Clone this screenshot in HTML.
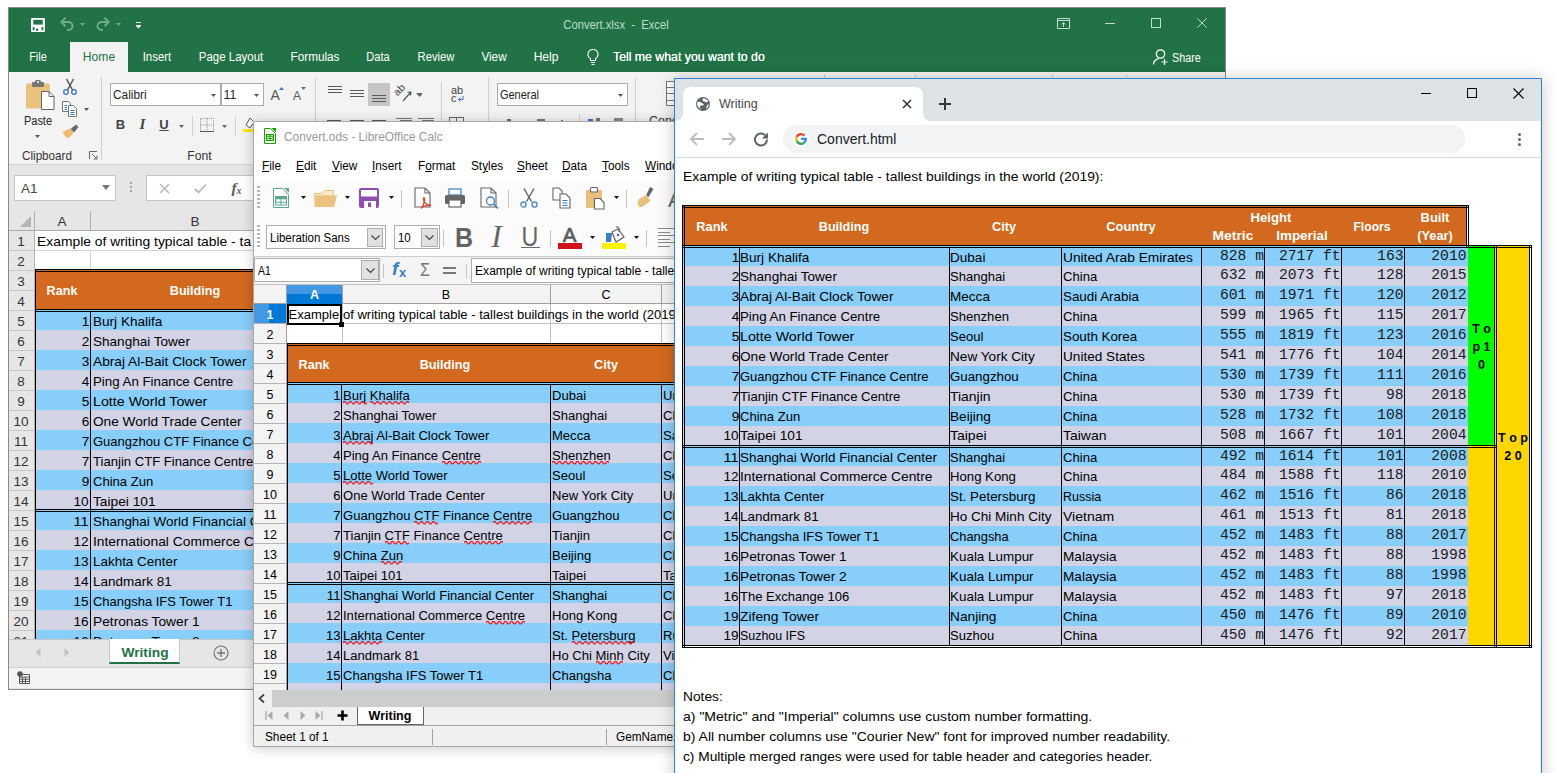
<!DOCTYPE html>
<html><head><meta charset="utf-8"><title>Convert</title>
<style>
html,body{margin:0;padding:0;background:#fff;}
body{width:1557px;height:773px;position:relative;overflow:hidden;font-family:"Liberation Sans",sans-serif;}
.win{position:absolute;overflow:hidden;}
.win div,.win svg{position:absolute;}
.in{width:1600px;height:900px;}
u{text-decoration:underline;}
</style></head><body>
<div class="win" style="left:8px;top:7px;width:1218px;height:683px;border:1px solid #8a8a8a;box-sizing:border-box;z-index:1"><div class="in" style="left:-9px;top:-8px"><div style="left:8px;top:7px;width:1218px;height:683px;background:#e6e6e6;"></div><div style="left:9px;top:8px;width:1216px;height:64px;background:#217346;"></div><svg style="left:31px;top:18px;" width="14" height="14" viewBox="0 0 14 14"><rect x="0" y="0" width="14" height="14" rx="1.200" fill="#fff"/><rect x="2.300" y="1.800" width="9.400" height="4.800" fill="#217346"/><rect x="1.700" y="9" width="1.700" height="3.400" fill="#217346"/><rect x="10.600" y="9" width="1.700" height="3.400" fill="#217346"/><rect x="4.800" y="10.600" width="2.400" height="2.200" fill="#217346"/></svg><svg style="left:59px;top:16px;" width="16" height="16" viewBox="0 0 16 16"><path d="M2.500 6 H9.500 A4 4 0 0 1 9.500 14 H8 M6.500 1.800 L2.300 6 L6.500 10.200" stroke="#6ea98a" stroke-width="2" fill="none"/></svg><svg style="left:80px;top:23px;" width="5" height="3" viewBox="0 0 5 3"><path d="M0 0 H5 L2.500 3Z" fill="#6ea98a"/></svg><svg style="left:95px;top:16px;" width="16" height="16" viewBox="0 0 16 16"><path d="M13.500 6 H6.500 A4 4 0 0 0 6.500 14 H8 M9.500 1.800 L13.700 6 L9.500 10.200" stroke="#6ea98a" stroke-width="2" fill="none"/></svg><svg style="left:116px;top:23px;" width="5" height="3" viewBox="0 0 5 3"><path d="M0 0 H5 L2.500 3Z" fill="#6ea98a"/></svg><svg style="left:136px;top:21.5px;" width="5" height="7" viewBox="0 0 5 7"><path d="M0 0.500 H5 M0 3.500 H5" stroke="#fff" stroke-width="1"/><path d="M0 4 H5 L2.500 6.500Z" fill="#fff"/></svg><div style="top:16.5px;height:16px;line-height:16px;font-size:12px;color:#bfdccb;font-family:'Liberation Sans',sans-serif;white-space:nowrap;left:466.20000000000005px;width:300px;text-align:center;transform:scaleX(0.9353);transform-origin:center center;">Convert.xlsx&nbsp; -&nbsp; Excel</div><svg style="left:1057px;top:18px;" width="13" height="11" viewBox="0 0 13 11"><path d="M0.500 0.500 H12.500 V10.500 H0.500 Z M0.500 2.500 H12.500 M6.500 9 V5 M4.500 6.500 L6.500 4.500 L8.500 6.500" stroke="#c2dccd" stroke-width="1" fill="none"/></svg><div style="left:1105px;top:23px;width:10px;height:1px;background:#c2dccd;"></div><div style="left:1151px;top:18px;width:10px;height:10px;border:1px solid #c2dccd;box-sizing:border-box;"></div><svg style="left:1197px;top:18px;" width="10" height="10" viewBox="0 0 10 10"><path d="M0.300 0.300 L9.700 9.700 M9.700 0.300 L0.300 9.700" stroke="#c2dccd" stroke-width="1" fill="none"/></svg><div style="left:70px;top:42px;width:58px;height:30px;background:#f3f3f3;"></div><div style="top:49.35px;height:16.3px;line-height:16.3px;font-size:12.3px;color:#fff;font-family:'Liberation Sans',sans-serif;white-space:nowrap;left:-22.0px;width:120px;text-align:center;transform:scaleX(0.888);transform-origin:center center;">File</div><div style="top:49.35px;height:16.3px;line-height:16.3px;font-size:12.3px;color:#217346;font-family:'Liberation Sans',sans-serif;white-space:nowrap;left:39.0px;width:120px;text-align:center;transform:scaleX(0.9844);transform-origin:center center;">Home</div><div style="top:49.35px;height:16.3px;line-height:16.3px;font-size:12.3px;color:#fff;font-family:'Liberation Sans',sans-serif;white-space:nowrap;left:96.5px;width:120px;text-align:center;transform:scaleX(0.9297);transform-origin:center center;">Insert</div><div style="top:49.35px;height:16.3px;line-height:16.3px;font-size:12.3px;color:#fff;font-family:'Liberation Sans',sans-serif;white-space:nowrap;left:170.5px;width:120px;text-align:center;transform:scaleX(0.9323);transform-origin:center center;">Page Layout</div><div style="top:49.35px;height:16.3px;line-height:16.3px;font-size:12.3px;color:#fff;font-family:'Liberation Sans',sans-serif;white-space:nowrap;left:254.5px;width:120px;text-align:center;transform:scaleX(0.9559);transform-origin:center center;">Formulas</div><div style="top:49.35px;height:16.3px;line-height:16.3px;font-size:12.3px;color:#fff;font-family:'Liberation Sans',sans-serif;white-space:nowrap;left:318.0px;width:120px;text-align:center;transform:scaleX(0.9006);transform-origin:center center;">Data</div><div style="top:49.35px;height:16.3px;line-height:16.3px;font-size:12.3px;color:#fff;font-family:'Liberation Sans',sans-serif;white-space:nowrap;left:375.5px;width:120px;text-align:center;transform:scaleX(0.9149);transform-origin:center center;">Review</div><div style="top:49.35px;height:16.3px;line-height:16.3px;font-size:12.3px;color:#fff;font-family:'Liberation Sans',sans-serif;white-space:nowrap;left:433.5px;width:120px;text-align:center;transform:scaleX(0.9531);transform-origin:center center;">View</div><div style="top:49.35px;height:16.3px;line-height:16.3px;font-size:12.3px;color:#fff;font-family:'Liberation Sans',sans-serif;white-space:nowrap;left:485.5px;width:120px;text-align:center;transform:scaleX(0.9764);transform-origin:center center;">Help</div><svg style="left:586px;top:48px;" width="14" height="18" viewBox="0 0 14 18"><path d="M7 1.500 A4.800 4.800 0 0 1 9.500 10.500 V12.500 H4.500 V10.500 A4.800 4.800 0 0 1 7 1.500 Z M5 14.500 H9 M5.500 16.500 H8.500" stroke="#fff" stroke-width="1.100" fill="none"/></svg><div style="top:49.35px;height:16.3px;line-height:16.3px;font-size:12.3px;color:#fff;font-family:'Liberation Sans',sans-serif;white-space:nowrap;left:613px;text-shadow:0 0 .4px #fff;">Tell me what you want to do</div><svg style="left:1152px;top:48px;" width="16" height="18" viewBox="0 0 16 18"><circle cx="8.500" cy="6" r="4.200" stroke="#fff" stroke-width="1.200" fill="none"/><path d="M1.500 16.500 A6 6 0 0 1 6.500 10.800 M9.500 14 H15.500 M12.500 11 V17" stroke="#fff" stroke-width="1.200" fill="none"/></svg><div style="top:49.5px;height:16px;line-height:16px;font-size:12px;color:#fff;font-family:'Liberation Sans',sans-serif;white-space:nowrap;left:1172px;transform:scaleX(0.8994);transform-origin:left center;">Share</div><div style="left:9px;top:72px;width:1216px;height:92px;background:#f3f3f3;"></div><div style="left:9px;top:164px;width:1216px;height:1px;background:#d2d2d2;"></div><svg style="left:25px;top:80px;" width="32" height="34" viewBox="0 0 32 34"><rect x="1" y="3.500" width="24" height="25" rx="1.500" fill="#e9c27c"/><rect x="7" y="2" width="12" height="5" rx="1" fill="#777"/><rect x="10" y="0" width="6" height="4" rx="1.500" fill="#777"/><rect x="12" y="1.300" width="2" height="1.500" fill="#f3f3f3"/><path d="M16.500 11.500 H24 L29 16.500 V29.500 H16.500 Z" fill="#fff" stroke="#666" stroke-width="1"/><path d="M24 11.500 V16.500 H29" fill="none" stroke="#666" stroke-width="1"/></svg><div style="top:112.85px;height:16.3px;line-height:16.3px;font-size:12.3px;color:#262626;font-family:'Liberation Sans',sans-serif;white-space:nowrap;left:8.200000000000003px;width:60px;text-align:center;transform:scaleX(0.8902);transform-origin:center center;">Paste</div><svg style="left:35px;top:134.5px;" width="5" height="3" viewBox="0 0 5 3"><path d="M0 0 H5 L2.500 3Z" fill="#555"/></svg><svg style="left:62px;top:78px;" width="16" height="18" viewBox="0 0 16 18"><path d="M4.500 1 L10.500 12 M11.500 1 L5.500 12" stroke="#555" stroke-width="1.500" fill="none"/><circle cx="4" cy="14" r="2.300" stroke="#3b73b9" stroke-width="1.300" fill="none"/><circle cx="12" cy="14" r="2.300" stroke="#3b73b9" stroke-width="1.300" fill="none"/></svg><svg style="left:62px;top:101px;" width="16" height="16" viewBox="0 0 16 16"><path d="M0.500 0.500 H6.500 L8.500 2.500 V10.500 H0.500 Z" fill="#fff" stroke="#777"/><path d="M2.500 4.500 H5 M2.500 6.500 H5 M2.500 8.500 H5" stroke="#3b73b9"/><path d="M6.500 4.500 H11.500 L14.500 7.500 V15.500 H6.500 Z" fill="#fff" stroke="#777"/><path d="M8.500 9.500 H12.500 M8.500 11.500 H12.500 M8.500 13.500 H12.500" stroke="#3b73b9"/></svg><svg style="left:84px;top:107.5px;" width="5" height="3" viewBox="0 0 5 3"><path d="M0 0 H5 L2.500 3Z" fill="#555"/></svg><svg style="left:62px;top:124px;" width="18" height="16" viewBox="0 0 18 16"><path d="M8.500 5 L14 0.500 L16.500 3 L12 8.500 Z" fill="#6a6a6a"/><path d="M0.500 8 L8 4.500 L11.500 9 L6.500 14 L4 13.500 Z" fill="#ecbc6c"/></svg><div style="top:148.4px;height:16.2px;line-height:16.2px;font-size:12.2px;color:#333;font-family:'Liberation Sans',sans-serif;white-space:nowrap;left:6.5px;width:80px;text-align:center;transform:scaleX(0.9575);transform-origin:center center;">Clipboard</div><svg style="left:89px;top:151px;" width="9" height="9" viewBox="0 0 9 9"><path d="M0.500 8 V0.500 H8 M3 3 L8 8 M8 4.500 V8 H4.500" stroke="#666" stroke-width="1" fill="none"/></svg><div style="left:101px;top:77px;width:1px;height:83px;background:#d0d0d0;"></div><div style="left:110px;top:83px;width:111px;height:23px;background:#fff;border:1px solid #ababab;box-sizing:border-box;"></div><div style="left:221px;top:83px;width:43px;height:23px;background:#fff;border:1px solid #ababab;box-sizing:border-box;"></div><div style="top:86.85px;height:16.3px;line-height:16.3px;font-size:12.3px;color:#222;font-family:'Liberation Sans',sans-serif;white-space:nowrap;left:113px;transform:scaleX(0.9639);transform-origin:left center;">Calibri</div><div style="top:86.85px;height:16.3px;line-height:16.3px;font-size:12.3px;color:#222;font-family:'Liberation Sans',sans-serif;white-space:nowrap;left:223.5px;">11</div><svg style="left:211px;top:93.5px;" width="5" height="3" viewBox="0 0 5 3"><path d="M0 0 H5 L2.500 3Z" fill="#555"/></svg><svg style="left:254px;top:93.5px;" width="5" height="3" viewBox="0 0 5 3"><path d="M0 0 H5 L2.500 3Z" fill="#555"/></svg><div style="top:86.0px;height:18px;line-height:18px;font-size:14px;color:#555;font-family:'Liberation Sans',sans-serif;white-space:nowrap;left:270.5px;">A</div><svg style="left:278.5px;top:87px;" width="5" height="3" viewBox="0 0 5 3"><path d="M0 3 H5 L2.500 0Z" fill="#3b73b9"/></svg><div style="top:88.0px;height:16px;line-height:16px;font-size:12px;color:#555;font-family:'Liberation Sans',sans-serif;white-space:nowrap;left:293px;">A</div><svg style="left:300.5px;top:87px;" width="5" height="3" viewBox="0 0 5 3"><path d="M0 0 H5 L2.500 3Z" fill="#3b73b9"/></svg><div style="top:115.8px;height:17px;line-height:17px;font-size:13px;color:#444;font-family:'Liberation Sans',sans-serif;white-space:nowrap;font-weight:bold;left:110.5px;width:20px;text-align:center;">B</div><div style="top:114.8px;height:19px;line-height:19px;font-size:15px;color:#444;font-family:'Liberation Serif',serif;white-space:nowrap;left:132.5px;width:20px;text-align:center;font-style:italic;font-weight:bold;">I</div><div style="top:115.8px;height:17px;line-height:17px;font-size:13px;color:#444;font-family:'Liberation Sans',sans-serif;white-space:nowrap;font-weight:bold;left:154.0px;width:20px;text-align:center;text-decoration:underline;">U</div><svg style="left:179px;top:124.5px;" width="5" height="3" viewBox="0 0 5 3"><path d="M0 0 H5 L2.500 3Z" fill="#666"/></svg><div style="left:192px;top:116px;width:1px;height:20px;background:#d0d0d0;"></div><svg style="left:200px;top:118px;" width="14" height="14" viewBox="0 0 14 14"><path d="M0.500 0.500 H13.500 V13.500 H0.500 Z M7 0.500 V13.500 M0.500 7 H13.500" stroke="#8a8a8a" stroke-width="1" stroke-dasharray="1 1.100" fill="none"/><path d="M0 13.500 H14" stroke="#555" stroke-width="1"/></svg><svg style="left:222px;top:124.5px;" width="5" height="3" viewBox="0 0 5 3"><path d="M0 0 H5 L2.500 3Z" fill="#666"/></svg><div style="left:235px;top:116px;width:1px;height:20px;background:#d0d0d0;"></div><svg style="left:243px;top:116px;" width="12" height="18" viewBox="0 0 12 18"><path d="M3 9 L7 2 L11 6 L7 12 Z" stroke="#555" fill="#fff"/><rect x="0" y="13" width="12" height="3" fill="#ffe800"/></svg><div style="top:148.4px;height:16.2px;line-height:16.2px;font-size:12.2px;color:#333;font-family:'Liberation Sans',sans-serif;white-space:nowrap;left:159.5px;width:80px;text-align:center;">Font</div><div style="left:315px;top:77px;width:1px;height:83px;background:#d0d0d0;"></div><div style="left:368px;top:83px;width:22px;height:23px;background:#c6c6c6;"></div><div style="left:328px;top:86px;width:14px;height:1px;background:#5a5a5a;"></div><div style="left:328px;top:89px;width:14px;height:1px;background:#5a5a5a;"></div><div style="left:328px;top:92px;width:14px;height:1px;background:#5a5a5a;"></div><div style="left:350px;top:90px;width:14px;height:1px;background:#5a5a5a;"></div><div style="left:350px;top:93px;width:14px;height:1px;background:#5a5a5a;"></div><div style="left:350px;top:96px;width:14px;height:1px;background:#5a5a5a;"></div><div style="left:372px;top:95px;width:14px;height:1px;background:#5a5a5a;"></div><div style="left:372px;top:98px;width:14px;height:1px;background:#5a5a5a;"></div><div style="left:372px;top:101px;width:14px;height:1px;background:#5a5a5a;"></div><svg style="left:394px;top:84px;" width="20" height="20" viewBox="0 0 20 20"><path d="M9 17 L17 8 M17 8 L13.500 8.500 M17 8 L16.500 11.500" stroke="#555" stroke-width="1.200" fill="none"/><text x="0" y="0" font-size="10.500" fill="#444" font-family="Liberation Sans" transform="translate(3.500 12.500) rotate(-45)">ab</text></svg><svg style="left:416px;top:93px;" width="6" height="4" viewBox="0 0 6 4"><path d="M0 0 H7 L3.500 4Z" fill="#666"/></svg><div style="left:441px;top:82px;width:1px;height:78px;background:#d0d0d0;"></div><div style="top:82.5px;height:15px;line-height:15px;font-size:11px;color:#444;font-family:'Liberation Sans',sans-serif;white-space:nowrap;left:451px;">ab</div><div style="top:90.5px;height:15px;line-height:15px;font-size:11px;color:#444;font-family:'Liberation Sans',sans-serif;white-space:nowrap;left:451px;">c</div><svg style="left:457px;top:96px;" width="7" height="6" viewBox="0 0 7 6"><path d="M6 0 V3.500 H1.500 M3.500 1.500 L1.500 3.500 L3.500 5.500" stroke="#3b73b9" stroke-width="1" fill="none"/></svg><div style="left:488px;top:77px;width:1px;height:83px;background:#d0d0d0;"></div><div style="left:497px;top:83px;width:131px;height:23px;background:#fff;border:1px solid #ababab;box-sizing:border-box;"></div><div style="top:86.85px;height:16.3px;line-height:16.3px;font-size:12.3px;color:#222;font-family:'Liberation Sans',sans-serif;white-space:nowrap;left:500px;transform:scaleX(0.8912);transform-origin:left center;">General</div><svg style="left:618px;top:93.5px;" width="5" height="3" viewBox="0 0 5 3"><path d="M0 0 H5 L2.500 3Z" fill="#555"/></svg><div style="left:635px;top:77px;width:1px;height:83px;background:#d0d0d0;"></div><div style="left:666px;top:81px;width:14px;height:25px;background:#fff;border:1px solid #777;box-sizing:border-box;"></div><div style="left:666px;top:87.2px;width:14px;height:1px;background:#777;"></div><div style="left:666px;top:93.4px;width:14px;height:1px;background:#777;"></div><div style="left:666px;top:99.6px;width:14px;height:1px;background:#777;"></div><div style="top:113.25px;height:16.5px;line-height:16.5px;font-size:12.5px;color:#333;font-family:'Liberation Sans',sans-serif;white-space:nowrap;left:649px;">Conditional</div><div style="left:327px;top:120px;width:14px;height:1px;background:#5a5a5a;"></div><div style="left:350px;top:120px;width:14px;height:1px;background:#5a5a5a;"></div><div style="left:372px;top:120px;width:14px;height:1px;background:#5a5a5a;"></div><div style="left:396px;top:118px;width:16px;height:1px;background:#777;"></div><div style="left:400px;top:120px;width:12px;height:1px;background:#777;"></div><div style="left:418px;top:118px;width:16px;height:1px;background:#777;"></div><div style="left:422px;top:120px;width:12px;height:1px;background:#777;"></div><div style="left:449px;top:117px;width:15px;height:6px;border:1px solid #666;box-sizing:border-box;"></div><div style="left:456px;top:117px;width:1px;height:4px;background:#666;"></div><div style="left:507px;top:119px;width:4px;height:2px;background:#666;"></div><div style="left:537px;top:119px;width:8px;height:2px;background:#777;"></div><div style="left:561px;top:120px;width:2px;height:1px;background:#777;"></div><div style="left:579px;top:114px;width:1px;height:7px;background:#d0d0d0;"></div><div style="left:588px;top:119px;width:5px;height:2px;background:#3b73b9;"></div><div style="left:596px;top:118px;width:4px;height:3px;background:#777;"></div><div style="left:614px;top:118px;width:9px;height:3px;background:#888;"></div><div style="left:824px;top:75px;width:1px;height:5px;background:#c8c8c8;"></div><div style="left:915px;top:75px;width:1px;height:5px;background:#c8c8c8;"></div><div style="left:1052px;top:75px;width:1px;height:5px;background:#c8c8c8;"></div><div style="left:1126px;top:75px;width:1px;height:5px;background:#c8c8c8;"></div><div style="left:14px;top:175px;width:102px;height:26px;background:#fff;border:1px solid #c6c6c6;box-sizing:border-box;"></div><div style="top:179.75px;height:17.5px;line-height:17.5px;font-size:13.5px;color:#444;font-family:'Liberation Sans',sans-serif;white-space:nowrap;left:21px;">A1</div><svg style="left:102px;top:185px;" width="8" height="5" viewBox="0 0 8 5"><path d="M0 0 H8 L4 5Z" fill="#777"/></svg><div style="left:130px;top:182px;width:2px;height:2px;background:#a0a0a0;"></div><div style="left:130px;top:186px;width:2px;height:2px;background:#a0a0a0;"></div><div style="left:130px;top:190px;width:2px;height:2px;background:#a0a0a0;"></div><div style="left:146px;top:175px;width:700px;height:26px;background:#fff;border:1px solid #c6c6c6;box-sizing:border-box;"></div><svg style="left:159px;top:183px;" width="11" height="11" viewBox="0 0 11 11"><path d="M1 1 L10 10 M10 1 L1 10" stroke="#b9b9b9" stroke-width="1.500" fill="none"/></svg><svg style="left:194px;top:183px;" width="13" height="11" viewBox="0 0 13 11"><path d="M1 6 L4.500 9.500 L12 1.500" stroke="#b9b9b9" stroke-width="1.800" fill="none"/></svg><div style="top:177.75px;height:19.5px;line-height:19.5px;font-size:15.5px;color:#5a5a5a;font-family:'Liberation Serif',serif;white-space:nowrap;left:231.5px;font-style:italic;font-weight:bold;">f</div><div style="top:183.5px;height:14px;line-height:14px;font-size:10px;color:#5a5a5a;font-family:'Liberation Serif',serif;white-space:nowrap;left:236.5px;font-style:italic;font-weight:bold;">x</div><div style="left:9px;top:211px;width:1216px;height:20px;background:#e6e6e6;"></div><svg style="left:20px;top:216px;" width="12" height="12" viewBox="0 0 12 12"><path d="M11 0 V11 H0 Z" fill="#b4b4b4"/></svg><div style="left:34px;top:211px;width:1px;height:20px;background:#b1b1b1;"></div><div style="left:90px;top:211px;width:1px;height:20px;background:#b1b1b1;"></div><div style="left:9px;top:230px;width:300px;height:1px;background:#ababab;"></div><div style="top:212.75px;height:17.5px;line-height:17.5px;font-size:13.5px;color:#333;font-family:'Liberation Sans',sans-serif;white-space:nowrap;left:47.0px;width:30px;text-align:center;">A</div><div style="top:212.75px;height:17.5px;line-height:17.5px;font-size:13.5px;color:#333;font-family:'Liberation Sans',sans-serif;white-space:nowrap;left:180.0px;width:30px;text-align:center;">B</div><div style="left:35px;top:231px;width:300px;height:408px;background:#fff;"></div><div style="left:34px;top:231px;width:1px;height:408px;background:#b1b1b1;"></div><div style="top:232.75px;height:17.5px;line-height:17.5px;font-size:13.5px;color:#333;font-family:'Liberation Sans',sans-serif;white-space:nowrap;left:8.0px;width:26px;text-align:center;">1</div><div style="left:9px;top:250px;width:25px;height:1px;background:#c9c9c9;"></div><div style="top:252.75px;height:17.5px;line-height:17.5px;font-size:13.5px;color:#333;font-family:'Liberation Sans',sans-serif;white-space:nowrap;left:8.0px;width:26px;text-align:center;">2</div><div style="left:9px;top:270px;width:25px;height:1px;background:#c9c9c9;"></div><div style="top:272.75px;height:17.5px;line-height:17.5px;font-size:13.5px;color:#333;font-family:'Liberation Sans',sans-serif;white-space:nowrap;left:8.0px;width:26px;text-align:center;">3</div><div style="left:9px;top:290px;width:25px;height:1px;background:#c9c9c9;"></div><div style="top:292.75px;height:17.5px;line-height:17.5px;font-size:13.5px;color:#333;font-family:'Liberation Sans',sans-serif;white-space:nowrap;left:8.0px;width:26px;text-align:center;">4</div><div style="left:9px;top:310px;width:25px;height:1px;background:#c9c9c9;"></div><div style="top:312.75px;height:17.5px;line-height:17.5px;font-size:13.5px;color:#333;font-family:'Liberation Sans',sans-serif;white-space:nowrap;left:8.0px;width:26px;text-align:center;">5</div><div style="left:9px;top:330px;width:25px;height:1px;background:#c9c9c9;"></div><div style="top:332.75px;height:17.5px;line-height:17.5px;font-size:13.5px;color:#333;font-family:'Liberation Sans',sans-serif;white-space:nowrap;left:8.0px;width:26px;text-align:center;">6</div><div style="left:9px;top:350px;width:25px;height:1px;background:#c9c9c9;"></div><div style="top:352.75px;height:17.5px;line-height:17.5px;font-size:13.5px;color:#333;font-family:'Liberation Sans',sans-serif;white-space:nowrap;left:8.0px;width:26px;text-align:center;">7</div><div style="left:9px;top:370px;width:25px;height:1px;background:#c9c9c9;"></div><div style="top:372.75px;height:17.5px;line-height:17.5px;font-size:13.5px;color:#333;font-family:'Liberation Sans',sans-serif;white-space:nowrap;left:8.0px;width:26px;text-align:center;">8</div><div style="left:9px;top:390px;width:25px;height:1px;background:#c9c9c9;"></div><div style="top:392.75px;height:17.5px;line-height:17.5px;font-size:13.5px;color:#333;font-family:'Liberation Sans',sans-serif;white-space:nowrap;left:8.0px;width:26px;text-align:center;">9</div><div style="left:9px;top:410px;width:25px;height:1px;background:#c9c9c9;"></div><div style="top:412.75px;height:17.5px;line-height:17.5px;font-size:13.5px;color:#333;font-family:'Liberation Sans',sans-serif;white-space:nowrap;left:8.0px;width:26px;text-align:center;">10</div><div style="left:9px;top:430px;width:25px;height:1px;background:#c9c9c9;"></div><div style="top:432.75px;height:17.5px;line-height:17.5px;font-size:13.5px;color:#333;font-family:'Liberation Sans',sans-serif;white-space:nowrap;left:8.0px;width:26px;text-align:center;">11</div><div style="left:9px;top:450px;width:25px;height:1px;background:#c9c9c9;"></div><div style="top:452.75px;height:17.5px;line-height:17.5px;font-size:13.5px;color:#333;font-family:'Liberation Sans',sans-serif;white-space:nowrap;left:8.0px;width:26px;text-align:center;">12</div><div style="left:9px;top:470px;width:25px;height:1px;background:#c9c9c9;"></div><div style="top:472.75px;height:17.5px;line-height:17.5px;font-size:13.5px;color:#333;font-family:'Liberation Sans',sans-serif;white-space:nowrap;left:8.0px;width:26px;text-align:center;">13</div><div style="left:9px;top:490px;width:25px;height:1px;background:#c9c9c9;"></div><div style="top:492.75px;height:17.5px;line-height:17.5px;font-size:13.5px;color:#333;font-family:'Liberation Sans',sans-serif;white-space:nowrap;left:8.0px;width:26px;text-align:center;">14</div><div style="left:9px;top:510px;width:25px;height:1px;background:#c9c9c9;"></div><div style="top:512.75px;height:17.5px;line-height:17.5px;font-size:13.5px;color:#333;font-family:'Liberation Sans',sans-serif;white-space:nowrap;left:8.0px;width:26px;text-align:center;">15</div><div style="left:9px;top:530px;width:25px;height:1px;background:#c9c9c9;"></div><div style="top:532.75px;height:17.5px;line-height:17.5px;font-size:13.5px;color:#333;font-family:'Liberation Sans',sans-serif;white-space:nowrap;left:8.0px;width:26px;text-align:center;">16</div><div style="left:9px;top:550px;width:25px;height:1px;background:#c9c9c9;"></div><div style="top:552.75px;height:17.5px;line-height:17.5px;font-size:13.5px;color:#333;font-family:'Liberation Sans',sans-serif;white-space:nowrap;left:8.0px;width:26px;text-align:center;">17</div><div style="left:9px;top:570px;width:25px;height:1px;background:#c9c9c9;"></div><div style="top:572.75px;height:17.5px;line-height:17.5px;font-size:13.5px;color:#333;font-family:'Liberation Sans',sans-serif;white-space:nowrap;left:8.0px;width:26px;text-align:center;">18</div><div style="left:9px;top:590px;width:25px;height:1px;background:#c9c9c9;"></div><div style="top:592.75px;height:17.5px;line-height:17.5px;font-size:13.5px;color:#333;font-family:'Liberation Sans',sans-serif;white-space:nowrap;left:8.0px;width:26px;text-align:center;">19</div><div style="left:9px;top:610px;width:25px;height:1px;background:#c9c9c9;"></div><div style="top:612.75px;height:17.5px;line-height:17.5px;font-size:13.5px;color:#333;font-family:'Liberation Sans',sans-serif;white-space:nowrap;left:8.0px;width:26px;text-align:center;">20</div><div style="left:9px;top:630px;width:25px;height:1px;background:#c9c9c9;"></div><div style="top:632.75px;height:17.5px;line-height:17.5px;font-size:13.5px;color:#333;font-family:'Liberation Sans',sans-serif;white-space:nowrap;left:8.0px;width:26px;text-align:center;">21</div><div style="left:9px;top:650px;width:25px;height:1px;background:#c9c9c9;"></div><div style="left:35px;top:250px;width:300px;height:1px;background:#d4d4d4;"></div><div style="left:90px;top:251px;width:1px;height:19px;background:#d4d4d4;"></div><div style="top:232.9px;height:17.2px;line-height:17.2px;font-size:13.2px;color:#000;font-family:'Liberation Sans',sans-serif;white-space:nowrap;left:37px;transform:scaleX(1.0508);transform-origin:left center;">Example of writing typical table - ta</div><div style="left:35px;top:270px;width:300px;height:40px;background:#d2691e;"></div><div style="left:35px;top:269px;width:300px;height:1px;background:#000;"></div><div style="left:35px;top:271px;width:300px;height:1px;background:#000;"></div><div style="top:282.4px;height:17.2px;line-height:17.2px;font-size:13.2px;color:#fff;font-family:'Liberation Sans',sans-serif;white-space:nowrap;font-weight:bold;left:32.0px;width:60px;text-align:center;transform:scaleX(0.955);transform-origin:center center;">Rank</div><div style="top:282.4px;height:17.2px;line-height:17.2px;font-size:13.2px;color:#fff;font-family:'Liberation Sans',sans-serif;white-space:nowrap;font-weight:bold;left:145.0px;width:100px;text-align:center;transform:scaleX(0.955);transform-origin:center center;">Building</div><div style="left:35px;top:310px;width:300px;height:20px;background:#87cefa;"></div><div style="left:35px;top:330px;width:300px;height:20px;background:#d3d3e6;"></div><div style="left:35px;top:350px;width:300px;height:20px;background:#87cefa;"></div><div style="left:35px;top:370px;width:300px;height:20px;background:#d3d3e6;"></div><div style="left:35px;top:390px;width:300px;height:20px;background:#87cefa;"></div><div style="left:35px;top:410px;width:300px;height:20px;background:#d3d3e6;"></div><div style="left:35px;top:430px;width:300px;height:20px;background:#87cefa;"></div><div style="left:35px;top:450px;width:300px;height:20px;background:#d3d3e6;"></div><div style="left:35px;top:470px;width:300px;height:20px;background:#87cefa;"></div><div style="left:35px;top:490px;width:300px;height:20px;background:#d3d3e6;"></div><div style="left:35px;top:510px;width:300px;height:20px;background:#87cefa;"></div><div style="left:35px;top:530px;width:300px;height:20px;background:#d3d3e6;"></div><div style="left:35px;top:550px;width:300px;height:20px;background:#87cefa;"></div><div style="left:35px;top:570px;width:300px;height:20px;background:#d3d3e6;"></div><div style="left:35px;top:590px;width:300px;height:20px;background:#87cefa;"></div><div style="left:35px;top:610px;width:300px;height:20px;background:#d3d3e6;"></div><div style="left:35px;top:630px;width:300px;height:20px;background:#87cefa;"></div><div style="left:35px;top:309px;width:300px;height:1px;background:#000;"></div><div style="left:35px;top:311px;width:300px;height:1px;background:#000;"></div><div style="left:35px;top:509px;width:300px;height:1px;background:#000;"></div><div style="left:35px;top:511px;width:300px;height:1px;background:#000;"></div><div style="left:35px;top:269px;width:1px;height:380px;background:#000;"></div><div style="left:90px;top:312px;width:1px;height:340px;background:#000;"></div><div style="top:312.9px;height:17.2px;line-height:17.2px;font-size:13.2px;color:#000;font-family:'Liberation Sans',sans-serif;white-space:nowrap;right:calc(100% - 89px);transform:scaleX(1.0308);transform-origin:right center;">1</div><div style="top:312.9px;height:17.2px;line-height:17.2px;font-size:13.2px;color:#000;font-family:'Liberation Sans',sans-serif;white-space:nowrap;left:93px;transform:scaleX(1.0286);transform-origin:left center;">Burj Khalifa</div><div style="top:332.9px;height:17.2px;line-height:17.2px;font-size:13.2px;color:#000;font-family:'Liberation Sans',sans-serif;white-space:nowrap;right:calc(100% - 89px);transform:scaleX(1.0308);transform-origin:right center;">2</div><div style="top:332.9px;height:17.2px;line-height:17.2px;font-size:13.2px;color:#000;font-family:'Liberation Sans',sans-serif;white-space:nowrap;left:93px;transform:scaleX(1.0271);transform-origin:left center;">Shanghai Tower</div><div style="top:352.9px;height:17.2px;line-height:17.2px;font-size:13.2px;color:#000;font-family:'Liberation Sans',sans-serif;white-space:nowrap;right:calc(100% - 89px);transform:scaleX(1.0308);transform-origin:right center;">3</div><div style="top:352.9px;height:17.2px;line-height:17.2px;font-size:13.2px;color:#000;font-family:'Liberation Sans',sans-serif;white-space:nowrap;left:93px;transform:scaleX(1.0388);transform-origin:left center;">Abraj Al-Bait Clock Tower</div><div style="top:372.9px;height:17.2px;line-height:17.2px;font-size:13.2px;color:#000;font-family:'Liberation Sans',sans-serif;white-space:nowrap;right:calc(100% - 89px);transform:scaleX(1.0308);transform-origin:right center;">4</div><div style="top:372.9px;height:17.2px;line-height:17.2px;font-size:13.2px;color:#000;font-family:'Liberation Sans',sans-serif;white-space:nowrap;left:93px;transform:scaleX(1.0068);transform-origin:left center;">Ping An Finance Centre</div><div style="top:392.9px;height:17.2px;line-height:17.2px;font-size:13.2px;color:#000;font-family:'Liberation Sans',sans-serif;white-space:nowrap;right:calc(100% - 89px);transform:scaleX(1.0308);transform-origin:right center;">5</div><div style="top:392.9px;height:17.2px;line-height:17.2px;font-size:13.2px;color:#000;font-family:'Liberation Sans',sans-serif;white-space:nowrap;left:93px;transform:scaleX(1.0805);transform-origin:left center;">Lotte World Tower</div><div style="top:412.9px;height:17.2px;line-height:17.2px;font-size:13.2px;color:#000;font-family:'Liberation Sans',sans-serif;white-space:nowrap;right:calc(100% - 89px);transform:scaleX(1.0308);transform-origin:right center;">6</div><div style="top:412.9px;height:17.2px;line-height:17.2px;font-size:13.2px;color:#000;font-family:'Liberation Sans',sans-serif;white-space:nowrap;left:93px;transform:scaleX(1.0358);transform-origin:left center;">One World Trade Center</div><div style="top:432.9px;height:17.2px;line-height:17.2px;font-size:13.2px;color:#000;font-family:'Liberation Sans',sans-serif;white-space:nowrap;right:calc(100% - 89px);transform:scaleX(1.0308);transform-origin:right center;">7</div><div style="top:432.9px;height:17.2px;line-height:17.2px;font-size:13.2px;color:#000;font-family:'Liberation Sans',sans-serif;white-space:nowrap;left:93px;transform:scaleX(0.9855);transform-origin:left center;">Guangzhou CTF Finance Centre</div><div style="top:452.9px;height:17.2px;line-height:17.2px;font-size:13.2px;color:#000;font-family:'Liberation Sans',sans-serif;white-space:nowrap;right:calc(100% - 89px);transform:scaleX(1.0308);transform-origin:right center;">7</div><div style="top:452.9px;height:17.2px;line-height:17.2px;font-size:13.2px;color:#000;font-family:'Liberation Sans',sans-serif;white-space:nowrap;left:93px;transform:scaleX(0.993);transform-origin:left center;">Tianjin CTF Finance Centre</div><div style="top:472.9px;height:17.2px;line-height:17.2px;font-size:13.2px;color:#000;font-family:'Liberation Sans',sans-serif;white-space:nowrap;right:calc(100% - 89px);transform:scaleX(1.0308);transform-origin:right center;">9</div><div style="top:472.9px;height:17.2px;line-height:17.2px;font-size:13.2px;color:#000;font-family:'Liberation Sans',sans-serif;white-space:nowrap;left:93px;transform:scaleX(0.9899);transform-origin:left center;">China Zun</div><div style="top:492.9px;height:17.2px;line-height:17.2px;font-size:13.2px;color:#000;font-family:'Liberation Sans',sans-serif;white-space:nowrap;right:calc(100% - 89px);transform:scaleX(1.0308);transform-origin:right center;">10</div><div style="top:492.9px;height:17.2px;line-height:17.2px;font-size:13.2px;color:#000;font-family:'Liberation Sans',sans-serif;white-space:nowrap;left:93px;transform:scaleX(1.0407);transform-origin:left center;">Taipei 101</div><div style="top:512.9px;height:17.2px;line-height:17.2px;font-size:13.2px;color:#000;font-family:'Liberation Sans',sans-serif;white-space:nowrap;right:calc(100% - 89px);transform:scaleX(1.1045);transform-origin:right center;">11</div><div style="top:512.9px;height:17.2px;line-height:17.2px;font-size:13.2px;color:#000;font-family:'Liberation Sans',sans-serif;white-space:nowrap;left:93px;transform:scaleX(1.0194);transform-origin:left center;">Shanghai World Financial Center</div><div style="top:532.9px;height:17.2px;line-height:17.2px;font-size:13.2px;color:#000;font-family:'Liberation Sans',sans-serif;white-space:nowrap;right:calc(100% - 89px);transform:scaleX(1.0308);transform-origin:right center;">12</div><div style="top:532.9px;height:17.2px;line-height:17.2px;font-size:13.2px;color:#000;font-family:'Liberation Sans',sans-serif;white-space:nowrap;left:93px;transform:scaleX(1.0461);transform-origin:left center;">International Commerce Centre</div><div style="top:552.9px;height:17.2px;line-height:17.2px;font-size:13.2px;color:#000;font-family:'Liberation Sans',sans-serif;white-space:nowrap;right:calc(100% - 89px);transform:scaleX(1.0308);transform-origin:right center;">13</div><div style="top:552.9px;height:17.2px;line-height:17.2px;font-size:13.2px;color:#000;font-family:'Liberation Sans',sans-serif;white-space:nowrap;left:93px;transform:scaleX(1.0186);transform-origin:left center;">Lakhta Center</div><div style="top:572.9px;height:17.2px;line-height:17.2px;font-size:13.2px;color:#000;font-family:'Liberation Sans',sans-serif;white-space:nowrap;right:calc(100% - 89px);transform:scaleX(1.0308);transform-origin:right center;">14</div><div style="top:572.9px;height:17.2px;line-height:17.2px;font-size:13.2px;color:#000;font-family:'Liberation Sans',sans-serif;white-space:nowrap;left:93px;transform:scaleX(1.0214);transform-origin:left center;">Landmark 81</div><div style="top:592.9px;height:17.2px;line-height:17.2px;font-size:13.2px;color:#000;font-family:'Liberation Sans',sans-serif;white-space:nowrap;right:calc(100% - 89px);transform:scaleX(1.0308);transform-origin:right center;">15</div><div style="top:592.9px;height:17.2px;line-height:17.2px;font-size:13.2px;color:#000;font-family:'Liberation Sans',sans-serif;white-space:nowrap;left:93px;transform:scaleX(0.9839);transform-origin:left center;">Changsha IFS Tower T1</div><div style="top:612.9px;height:17.2px;line-height:17.2px;font-size:13.2px;color:#000;font-family:'Liberation Sans',sans-serif;white-space:nowrap;right:calc(100% - 89px);transform:scaleX(1.0308);transform-origin:right center;">16</div><div style="top:612.9px;height:17.2px;line-height:17.2px;font-size:13.2px;color:#000;font-family:'Liberation Sans',sans-serif;white-space:nowrap;left:93px;transform:scaleX(1.0425);transform-origin:left center;">Petronas Tower 1</div><div style="top:632.9px;height:17.2px;line-height:17.2px;font-size:13.2px;color:#000;font-family:'Liberation Sans',sans-serif;white-space:nowrap;right:calc(100% - 89px);transform:scaleX(1.0308);transform-origin:right center;">16</div><div style="top:632.9px;height:17.2px;line-height:17.2px;font-size:13.2px;color:#000;font-family:'Liberation Sans',sans-serif;white-space:nowrap;left:93px;transform:scaleX(1.0425);transform-origin:left center;">Petronas Tower 2</div><div style="left:9px;top:639px;width:1216px;height:28px;background:#e6e6e6;"></div><div style="left:9px;top:639px;width:1216px;height:1px;background:#c6c6c6;"></div><svg style="left:35px;top:648px;" width="6" height="9" viewBox="0 0 6 9"><path d="M5.500 0 V9 L0.500 4.500Z" fill="#c3c3c3"/></svg><svg style="left:64px;top:648px;" width="6" height="9" viewBox="0 0 6 9"><path d="M0.500 0 V9 L5.500 4.500Z" fill="#c3c3c3"/></svg><div style="left:109px;top:639px;width:71px;height:25px;background:#fff;border-left:1px solid #c6c6c6;border-right:1px solid #c6c6c6;border-bottom:2px solid #217346;box-sizing:border-box;"></div><div style="top:643.55px;height:17.5px;line-height:17.5px;font-size:13.5px;color:#217346;font-family:'Liberation Sans',sans-serif;white-space:nowrap;font-weight:bold;left:109.5px;width:70px;text-align:center;transform:scaleX(1.02);transform-origin:center center;">Writing</div><svg style="left:213px;top:645px;" width="16" height="16" viewBox="0 0 16 16"><circle cx="8" cy="8" r="7" stroke="#777" stroke-width="1.200" fill="none"/><path d="M8 4 V12 M4 8 H12" stroke="#777" stroke-width="1.400"/></svg><div style="left:9px;top:667px;width:1216px;height:21px;background:#f3f3f3;"></div><div style="left:9px;top:667px;width:1216px;height:1px;background:#d0d0d0;"></div><svg style="left:17px;top:671px;" width="14" height="14" viewBox="0 0 14 14"><path d="M2.500 3.500 H12.500 V12.500 H2.500 Z M2.500 6 H12.500 M5.500 6 V12.500 M8.500 6 V12.500 M2.500 8.200 H12.500 M2.500 10.400 H12.500" stroke="#555" fill="#fff"/><circle cx="3" cy="3" r="2.800" fill="#555"/></svg></div></div>
<div class="win" style="left:253px;top:121px;width:467px;height:626px;border:1px solid #a8a8a8;box-sizing:border-box;box-shadow:0 1px 12px 0 rgba(0,0,0,.22);z-index:2"><div class="in" style="left:-254px;top:-122px"><div style="left:253px;top:121px;width:467px;height:626px;background:#fff;"></div><svg style="left:264px;top:128px;" width="12" height="16" viewBox="0 0 12 16"><path d="M0.500 0.500 H6.500 L11.500 5.500 V15.500 H0.500 Z" fill="#fff" stroke="#18a303" stroke-width="1"/><path d="M7.500 0 H12 V4.500 Z" fill="#18a303"/><rect x="2" y="6" width="8" height="7" fill="#18a303"/><path d="M3 7.800 H5.500 M6.500 7.800 H9 M3 9.600 H5.500 M6.500 9.600 H9 M3 11.400 H5.500 M6.500 11.400 H9" stroke="#fff" stroke-width="0.900"/></svg><div style="top:129.35px;height:16.3px;line-height:16.3px;font-size:12.3px;color:#999;font-family:'Liberation Sans',sans-serif;white-space:nowrap;left:283.5px;transform:scaleX(0.964);transform-origin:left center;">Convert.ods - LibreOffice Calc</div><div style="top:158.35px;height:16.3px;line-height:16.3px;font-size:12.3px;color:#000;font-family:'Liberation Sans',sans-serif;white-space:nowrap;left:262px;transform:scaleX(0.96);transform-origin:left center;"><u>F</u>ile</div><div style="top:158.35px;height:16.3px;line-height:16.3px;font-size:12.3px;color:#000;font-family:'Liberation Sans',sans-serif;white-space:nowrap;left:296px;transform:scaleX(0.96);transform-origin:left center;"><u>E</u>dit</div><div style="top:158.35px;height:16.3px;line-height:16.3px;font-size:12.3px;color:#000;font-family:'Liberation Sans',sans-serif;white-space:nowrap;left:332px;transform:scaleX(0.96);transform-origin:left center;"><u>V</u>iew</div><div style="top:158.35px;height:16.3px;line-height:16.3px;font-size:12.3px;color:#000;font-family:'Liberation Sans',sans-serif;white-space:nowrap;left:372px;transform:scaleX(0.96);transform-origin:left center;"><u>I</u>nsert</div><div style="top:158.35px;height:16.3px;line-height:16.3px;font-size:12.3px;color:#000;font-family:'Liberation Sans',sans-serif;white-space:nowrap;left:418px;transform:scaleX(0.96);transform-origin:left center;">F<u>o</u>rmat</div><div style="top:158.35px;height:16.3px;line-height:16.3px;font-size:12.3px;color:#000;font-family:'Liberation Sans',sans-serif;white-space:nowrap;left:471px;transform:scaleX(0.96);transform-origin:left center;">St<u>y</u>les</div><div style="top:158.35px;height:16.3px;line-height:16.3px;font-size:12.3px;color:#000;font-family:'Liberation Sans',sans-serif;white-space:nowrap;left:517px;transform:scaleX(0.96);transform-origin:left center;"><u>S</u>heet</div><div style="top:158.35px;height:16.3px;line-height:16.3px;font-size:12.3px;color:#000;font-family:'Liberation Sans',sans-serif;white-space:nowrap;left:562px;transform:scaleX(0.96);transform-origin:left center;"><u>D</u>ata</div><div style="top:158.35px;height:16.3px;line-height:16.3px;font-size:12.3px;color:#000;font-family:'Liberation Sans',sans-serif;white-space:nowrap;left:602px;transform:scaleX(0.96);transform-origin:left center;"><u>T</u>ools</div><div style="top:158.35px;height:16.3px;line-height:16.3px;font-size:12.3px;color:#000;font-family:'Liberation Sans',sans-serif;white-space:nowrap;left:645px;transform:scaleX(0.96);transform-origin:left center;"><u>W</u>indow</div><div style="left:254px;top:180px;width:465px;height:37px;background:#fbfbfb;"></div><div style="left:254px;top:217px;width:465px;height:40px;background:#fbfbfb;"></div><div style="left:254px;top:257px;width:465px;height:28px;background:#f4f4f4;"></div><div style="left:254px;top:256px;width:465px;height:1px;background:#cccccc;"></div><div style="left:257px;top:186px;width:3px;height:2px;background:#b4b4b4;"></div><div style="left:257px;top:190px;width:3px;height:2px;background:#b4b4b4;"></div><div style="left:257px;top:194px;width:3px;height:2px;background:#b4b4b4;"></div><div style="left:257px;top:198px;width:3px;height:2px;background:#b4b4b4;"></div><div style="left:257px;top:202px;width:3px;height:2px;background:#b4b4b4;"></div><div style="left:257px;top:206px;width:3px;height:2px;background:#b4b4b4;"></div><div style="left:257px;top:225px;width:3px;height:2px;background:#b4b4b4;"></div><div style="left:257px;top:229px;width:3px;height:2px;background:#b4b4b4;"></div><div style="left:257px;top:233px;width:3px;height:2px;background:#b4b4b4;"></div><div style="left:257px;top:237px;width:3px;height:2px;background:#b4b4b4;"></div><div style="left:257px;top:241px;width:3px;height:2px;background:#b4b4b4;"></div><div style="left:257px;top:245px;width:3px;height:2px;background:#b4b4b4;"></div><svg style="left:273px;top:188px;" width="17" height="20" viewBox="0 0 17 20"><path d="M0.500 0.500 H9.500 L15.500 6.500 V19.500 H0.500 Z" fill="#fff" stroke="#5fa890" stroke-width="1"/><path d="M11 0 H16 V5 Z" fill="#5fa890"/><rect x="2.500" y="8.500" width="11" height="8.500" fill="#fff" stroke="#5fa890" stroke-width="1"/><rect x="2.500" y="8.500" width="11" height="2.800" fill="#5fa890"/><path d="M2.500 14.200 H13.500 M8 11 V17" stroke="#5fa890" stroke-width="1"/></svg><svg style="left:301px;top:196px;" width="5" height="3" viewBox="0 0 5 3"><path d="M0 0 H5 L2.500 3Z" fill="#111"/></svg><svg style="left:314px;top:189px;" width="24" height="19" viewBox="0 0 24 19"><path d="M0.500 4.500 H8 L10.500 1.500 H19.500 V7 H0.500 Z" fill="#fbe9c8" stroke="#e9c27e" stroke-width="1"/><path d="M0.500 18 V7 L3.500 6.500 H23 L20 18 Z" fill="#ecc27c"/></svg><svg style="left:345px;top:196px;" width="5" height="3" viewBox="0 0 5 3"><path d="M0 0 H5 L2.500 3Z" fill="#111"/></svg><svg style="left:359px;top:188px;" width="20" height="20" viewBox="0 0 20 20"><rect x="0" y="0" width="20" height="20" rx="2" fill="#8e4fb0"/><rect x="2" y="2" width="16" height="6.500" fill="#fff"/><rect x="5" y="13" width="12" height="7" fill="#fff"/><rect x="9" y="14.500" width="3" height="4.500" fill="#8e4fb0"/></svg><svg style="left:389px;top:196px;" width="5" height="3" viewBox="0 0 5 3"><path d="M0 0 H5 L2.500 3Z" fill="#111"/></svg><div style="left:401px;top:190px;width:1px;height:18px;background:#c4c4c4;"></div><svg style="left:414px;top:187px;" width="18" height="22" viewBox="0 0 18 22"><path d="M1 1 H11 L16 6 V20 H1 Z" fill="#fff" stroke="#666" stroke-width="1.100"/><path d="M11 1 V6 H16" fill="none" stroke="#666" stroke-width="1.100"/><path d="M8 21 C10 16 11 13 10.500 11 C10 10 9 11 9.500 13 C10.500 16 13 18 17 18.500 M8 21 C6 21.500 9 18 17 18.500" stroke="#e0452c" stroke-width="1.300" fill="none"/></svg><svg style="left:444px;top:188px;" width="22" height="20" viewBox="0 0 22 20"><rect x="5" y="1" width="12" height="6" fill="#fff" stroke="#3a7fc4" stroke-width="1.200"/><rect x="1" y="7" width="20" height="9" rx="1.500" fill="#666"/><rect x="5" y="12" width="12" height="7" fill="#fff" stroke="#666" stroke-width="1.200"/></svg><svg style="left:480px;top:187px;" width="20" height="23" viewBox="0 0 20 23"><path d="M1 1 H11 L16 6 V20 H1 Z" fill="#fff" stroke="#666" stroke-width="1.100"/><path d="M11 1 V6 H16" fill="none" stroke="#666" stroke-width="1.100"/><circle cx="10.500" cy="14" r="4" fill="#fff" stroke="#3a7fc4" stroke-width="1.300"/><path d="M13.500 17 L18 21.500" stroke="#3a7fc4" stroke-width="1.600"/></svg><div style="left:508px;top:190px;width:1px;height:18px;background:#c4c4c4;"></div><svg style="left:519px;top:188px;" width="20" height="21" viewBox="0 0 20 21"><path d="M5 0.500 L12.500 13.500 M15 0.500 L7.500 13.500" stroke="#666" stroke-width="1.500" fill="none"/><circle cx="4.500" cy="16.500" r="2.600" stroke="#3a7fc4" stroke-width="1.200" fill="none"/><circle cx="15.500" cy="16.500" r="2.600" stroke="#3a7fc4" stroke-width="1.200" fill="none"/></svg><svg style="left:552px;top:187px;" width="20" height="22" viewBox="0 0 20 22"><path d="M1 1 H7 L10 4 V13 H1 Z" fill="#fff" stroke="#666" stroke-width="1.100"/><path d="M8 7 H14 L18 11 V21 H8 Z" fill="#fff" stroke="#666" stroke-width="1.100"/><path d="M10.500 13.500 H15.500 M10.500 16 H15.500 M10.500 18.500 H15.500" stroke="#3a7fc4" stroke-width="1"/></svg><svg style="left:585px;top:186px;" width="20" height="24" viewBox="0 0 20 24"><rect x="1" y="4" width="16" height="18" rx="1" fill="#e8bf7c"/><rect x="5.500" y="1.500" width="7" height="4.500" rx="1" fill="#fff" stroke="#666" stroke-width="1.100"/><path d="M9.500 12.500 H15 L19 16.500 V23 H9.500 Z" fill="#fff" stroke="#666" stroke-width="1.100"/></svg><svg style="left:614px;top:196px;" width="5" height="3" viewBox="0 0 5 3"><path d="M0 0 H5 L2.500 3Z" fill="#111"/></svg><div style="left:626px;top:190px;width:1px;height:18px;background:#c4c4c4;"></div><svg style="left:636px;top:186px;" width="20" height="24" viewBox="0 0 20 24"><path d="M14 1 L17.500 3 L12.500 11 L10 9.500 Z" fill="#666"/><path d="M3 13 L10.500 9 L14.500 15 L6 21 L3 21 L1.500 17 Z" fill="#e8bf7c"/></svg><div style="top:187.0px;height:26px;line-height:26px;font-size:22px;color:#666;font-family:'Liberation Sans',sans-serif;white-space:nowrap;left:668px;">A</div><div style="left:266px;top:225px;width:120px;height:24px;background:#fff;border:1px solid #adadad;box-sizing:border-box;"></div><div style="top:230.15px;height:16.3px;line-height:16.3px;font-size:12.3px;color:#000;font-family:'Liberation Sans',sans-serif;white-space:nowrap;left:270px;transform:scaleX(0.9324);transform-origin:left center;">Liberation Sans</div><div style="left:367px;top:228px;width:16px;height:19px;background:#e1e1e1;border:1px solid #adadad;box-sizing:border-box;"></div><svg style="left:370.5px;top:235px;" width="9" height="6" viewBox="0 0 9 6"><path d="M0.500 0.500 L4.500 4.500 L8.500 0.500" stroke="#444" stroke-width="1.200" fill="none"/></svg><div style="left:394px;top:225px;width:46px;height:24px;background:#fff;border:1px solid #adadad;box-sizing:border-box;"></div><div style="top:230.15px;height:16.3px;line-height:16.3px;font-size:12.3px;color:#000;font-family:'Liberation Sans',sans-serif;white-space:nowrap;left:398px;transform:scaleX(0.93);transform-origin:left center;">10</div><div style="left:421px;top:228px;width:17px;height:19px;background:#e1e1e1;border:1px solid #adadad;box-sizing:border-box;"></div><svg style="left:425px;top:235px;" width="9" height="6" viewBox="0 0 9 6"><path d="M0.500 0.500 L4.500 4.500 L8.500 0.500" stroke="#444" stroke-width="1.200" fill="none"/></svg><div style="left:443px;top:230px;width:1px;height:17px;background:#c4c4c4;"></div><div style="top:220.7px;height:34px;line-height:34px;font-size:27.5px;color:#636363;font-family:'Liberation Sans',sans-serif;white-space:nowrap;font-weight:bold;left:448.5px;width:30px;text-align:center;transform:scaleX(0.91);transform-origin:center center;">B</div><div style="top:220.2px;height:34px;line-height:34px;font-size:31.5px;color:#666;font-family:'Liberation Serif',serif;white-space:nowrap;left:481.5px;width:30px;text-align:center;font-style:italic;">I</div><div style="top:220.4px;height:34px;line-height:34px;font-size:27px;color:#666;font-family:'Liberation Sans',sans-serif;white-space:nowrap;left:515.0px;width:30px;text-align:center;transform:scaleX(0.86);transform-origin:center center;">U</div><div style="left:521px;top:247px;width:19px;height:1px;background:#666;"></div><div style="left:550px;top:230px;width:1px;height:17px;background:#c4c4c4;"></div><div style="top:220.3px;height:30px;line-height:30px;font-size:20.5px;color:#5e5e5e;font-family:'Liberation Sans',sans-serif;white-space:nowrap;left:554.5px;width:30px;text-align:center;-webkit-text-stroke:0.700px #5e5e5e;">A</div><div style="left:558px;top:243px;width:24px;height:6px;background:#d0101c;"></div><svg style="left:590px;top:236px;" width="5" height="3" viewBox="0 0 5 3"><path d="M0 0 H5 L2.500 3Z" fill="#111"/></svg><svg style="left:603px;top:226px;" width="24" height="18" viewBox="0 0 24 18"><path d="M9 6 L15 3 L21 11 L13 16 Z" fill="#fff" stroke="#666" stroke-width="1.200"/><path d="M13 1 A2.500 3.500 0 0 1 16 6" stroke="#666" stroke-width="1.200" fill="none"/><path d="M3 7 H9 L8 16 H3 Z" fill="#3a7fc4"/><circle cx="15" cy="9" r="1.300" fill="#666"/></svg><div style="left:602px;top:243px;width:24px;height:6px;background:#fff200;"></div><svg style="left:634px;top:236px;" width="5" height="3" viewBox="0 0 5 3"><path d="M0 0 H5 L2.500 3Z" fill="#111"/></svg><div style="left:646px;top:230px;width:1px;height:17px;background:#c4c4c4;"></div><div style="left:658px;top:228.0px;width:18px;height:1px;background:#8a8a8a;"></div><div style="left:658px;top:231.6px;width:12px;height:1px;background:#8a8a8a;"></div><div style="left:658px;top:235.2px;width:18px;height:1px;background:#8a8a8a;"></div><div style="left:658px;top:238.8px;width:12px;height:1px;background:#8a8a8a;"></div><div style="left:658px;top:242.4px;width:18px;height:1px;background:#8a8a8a;"></div><div style="left:658px;top:246.0px;width:12px;height:1px;background:#8a8a8a;"></div><div style="left:254px;top:258px;width:126px;height:24px;background:#fff;border:1px solid #adadad;box-sizing:border-box;"></div><div style="top:263.15000000000003px;height:16.3px;line-height:16.3px;font-size:12.3px;color:#000;font-family:'Liberation Sans',sans-serif;white-space:nowrap;left:258px;transform:scaleX(0.8441);transform-origin:left center;">A1</div><div style="left:361px;top:260px;width:18px;height:20px;background:#e1e1e1;border:1px solid #adadad;box-sizing:border-box;"></div><svg style="left:365.5px;top:268px;" width="9" height="6" viewBox="0 0 9 6"><path d="M0.500 0.500 L4.500 4.500 L8.500 0.500" stroke="#444" stroke-width="1.200" fill="none"/></svg><div style="left:383px;top:264px;width:1px;height:14px;background:#c4c4c4;"></div><div style="top:257.0px;height:24px;line-height:24px;font-size:19px;color:#3a7fc4;font-family:'Liberation Sans',sans-serif;white-space:nowrap;font-weight:bold;left:392px;font-style:italic;">f</div><div style="top:263.5px;height:18px;line-height:18px;font-size:13px;color:#3a7fc4;font-family:'Liberation Sans',sans-serif;white-space:nowrap;font-weight:bold;left:399px;">x</div><div style="top:258.0px;height:24px;line-height:24px;font-size:18px;color:#777;font-family:'Liberation Sans',sans-serif;white-space:nowrap;left:419.5px;transform:scaleX(0.9);transform-origin:left center;">&#931;</div><div style="left:443px;top:267px;width:13px;height:2px;background:#777;"></div><div style="left:443px;top:272px;width:13px;height:2px;background:#777;"></div><div style="left:466px;top:264px;width:1px;height:14px;background:#c4c4c4;"></div><div style="left:471px;top:258px;width:300px;height:25px;background:#fff;border:1px solid #adadad;box-sizing:border-box;"></div><div style="top:263.15000000000003px;height:16.3px;line-height:16.3px;font-size:12.3px;color:#000;font-family:'Liberation Sans',sans-serif;white-space:nowrap;left:475px;transform:scaleX(0.985);transform-origin:left center;">Example of writing typical table - tallest buildings</div><div style="left:254px;top:285px;width:470px;height:19px;background:#f3f3f3;"></div><div style="left:254px;top:284px;width:470px;height:1px;background:#c0c0c0;"></div><div style="left:254px;top:303px;width:470px;height:1px;background:#a0a0a0;"></div><div style="left:287px;top:285px;width:55px;height:19px;background:#0078d7;"></div><div style="left:287px;top:285px;width:55px;height:9px;background:#4298e2;"></div><div style="top:286.75px;height:16.5px;line-height:16.5px;font-size:12.5px;color:#fff;font-family:'Liberation Sans',sans-serif;white-space:nowrap;font-weight:bold;left:299.5px;width:30px;text-align:center;">A</div><div style="top:286.75px;height:16.5px;line-height:16.5px;font-size:12.5px;color:#000;font-family:'Liberation Sans',sans-serif;white-space:nowrap;left:431.0px;width:30px;text-align:center;">B</div><div style="top:286.75px;height:16.5px;line-height:16.5px;font-size:12.5px;color:#000;font-family:'Liberation Sans',sans-serif;white-space:nowrap;left:591.0px;width:30px;text-align:center;">C</div><div style="left:286px;top:285px;width:1px;height:19px;background:#a0a0a0;"></div><div style="left:342px;top:285px;width:1px;height:19px;background:#a0a0a0;"></div><div style="left:550px;top:285px;width:1px;height:19px;background:#a0a0a0;"></div><div style="left:661px;top:285px;width:1px;height:19px;background:#a0a0a0;"></div><div style="left:254px;top:304px;width:32px;height:386px;background:#f3f3f3;"></div><div style="left:254px;top:304px;width:32px;height:20px;background:#0078d7;"></div><div style="left:254px;top:304px;width:15px;height:20px;background:#4298e2;"></div><div style="left:286px;top:304px;width:1px;height:386px;background:#a0a0a0;"></div><div style="top:306.95px;height:16.5px;line-height:16.5px;font-size:12.5px;color:#fff;font-family:'Liberation Sans',sans-serif;white-space:nowrap;font-weight:bold;left:255.0px;width:30px;text-align:center;">1</div><div style="left:254px;top:323px;width:32px;height:1px;background:#b4b4b4;"></div><div style="top:326.95px;height:16.5px;line-height:16.5px;font-size:12.5px;color:#000;font-family:'Liberation Sans',sans-serif;white-space:nowrap;left:255.0px;width:30px;text-align:center;">2</div><div style="left:254px;top:343px;width:32px;height:1px;background:#b4b4b4;"></div><div style="top:346.95px;height:16.5px;line-height:16.5px;font-size:12.5px;color:#000;font-family:'Liberation Sans',sans-serif;white-space:nowrap;left:255.0px;width:30px;text-align:center;">3</div><div style="left:254px;top:363px;width:32px;height:1px;background:#b4b4b4;"></div><div style="top:366.95px;height:16.5px;line-height:16.5px;font-size:12.5px;color:#000;font-family:'Liberation Sans',sans-serif;white-space:nowrap;left:255.0px;width:30px;text-align:center;">4</div><div style="left:254px;top:383px;width:32px;height:1px;background:#b4b4b4;"></div><div style="top:386.95px;height:16.5px;line-height:16.5px;font-size:12.5px;color:#000;font-family:'Liberation Sans',sans-serif;white-space:nowrap;left:255.0px;width:30px;text-align:center;">5</div><div style="left:254px;top:403px;width:32px;height:1px;background:#b4b4b4;"></div><div style="top:406.95px;height:16.5px;line-height:16.5px;font-size:12.5px;color:#000;font-family:'Liberation Sans',sans-serif;white-space:nowrap;left:255.0px;width:30px;text-align:center;">6</div><div style="left:254px;top:423px;width:32px;height:1px;background:#b4b4b4;"></div><div style="top:426.95px;height:16.5px;line-height:16.5px;font-size:12.5px;color:#000;font-family:'Liberation Sans',sans-serif;white-space:nowrap;left:255.0px;width:30px;text-align:center;">7</div><div style="left:254px;top:443px;width:32px;height:1px;background:#b4b4b4;"></div><div style="top:446.95px;height:16.5px;line-height:16.5px;font-size:12.5px;color:#000;font-family:'Liberation Sans',sans-serif;white-space:nowrap;left:255.0px;width:30px;text-align:center;">8</div><div style="left:254px;top:463px;width:32px;height:1px;background:#b4b4b4;"></div><div style="top:466.95px;height:16.5px;line-height:16.5px;font-size:12.5px;color:#000;font-family:'Liberation Sans',sans-serif;white-space:nowrap;left:255.0px;width:30px;text-align:center;">9</div><div style="left:254px;top:483px;width:32px;height:1px;background:#b4b4b4;"></div><div style="top:486.95px;height:16.5px;line-height:16.5px;font-size:12.5px;color:#000;font-family:'Liberation Sans',sans-serif;white-space:nowrap;left:255.0px;width:30px;text-align:center;">10</div><div style="left:254px;top:503px;width:32px;height:1px;background:#b4b4b4;"></div><div style="top:506.95000000000005px;height:16.5px;line-height:16.5px;font-size:12.5px;color:#000;font-family:'Liberation Sans',sans-serif;white-space:nowrap;left:255.0px;width:30px;text-align:center;">11</div><div style="left:254px;top:523px;width:32px;height:1px;background:#b4b4b4;"></div><div style="top:526.95px;height:16.5px;line-height:16.5px;font-size:12.5px;color:#000;font-family:'Liberation Sans',sans-serif;white-space:nowrap;left:255.0px;width:30px;text-align:center;">12</div><div style="left:254px;top:543px;width:32px;height:1px;background:#b4b4b4;"></div><div style="top:546.95px;height:16.5px;line-height:16.5px;font-size:12.5px;color:#000;font-family:'Liberation Sans',sans-serif;white-space:nowrap;left:255.0px;width:30px;text-align:center;">13</div><div style="left:254px;top:563px;width:32px;height:1px;background:#b4b4b4;"></div><div style="top:566.95px;height:16.5px;line-height:16.5px;font-size:12.5px;color:#000;font-family:'Liberation Sans',sans-serif;white-space:nowrap;left:255.0px;width:30px;text-align:center;">14</div><div style="left:254px;top:583px;width:32px;height:1px;background:#b4b4b4;"></div><div style="top:586.95px;height:16.5px;line-height:16.5px;font-size:12.5px;color:#000;font-family:'Liberation Sans',sans-serif;white-space:nowrap;left:255.0px;width:30px;text-align:center;">15</div><div style="left:254px;top:603px;width:32px;height:1px;background:#b4b4b4;"></div><div style="top:606.95px;height:16.5px;line-height:16.5px;font-size:12.5px;color:#000;font-family:'Liberation Sans',sans-serif;white-space:nowrap;left:255.0px;width:30px;text-align:center;">16</div><div style="left:254px;top:623px;width:32px;height:1px;background:#b4b4b4;"></div><div style="top:626.95px;height:16.5px;line-height:16.5px;font-size:12.5px;color:#000;font-family:'Liberation Sans',sans-serif;white-space:nowrap;left:255.0px;width:30px;text-align:center;">17</div><div style="left:254px;top:643px;width:32px;height:1px;background:#b4b4b4;"></div><div style="top:646.95px;height:16.5px;line-height:16.5px;font-size:12.5px;color:#000;font-family:'Liberation Sans',sans-serif;white-space:nowrap;left:255.0px;width:30px;text-align:center;">18</div><div style="left:254px;top:663px;width:32px;height:1px;background:#b4b4b4;"></div><div style="top:666.95px;height:16.5px;line-height:16.5px;font-size:12.5px;color:#000;font-family:'Liberation Sans',sans-serif;white-space:nowrap;left:255.0px;width:30px;text-align:center;">19</div><div style="left:254px;top:683px;width:32px;height:1px;background:#b4b4b4;"></div><div style="left:287px;top:304px;width:440px;height:386px;background:#fff;"></div><div style="left:287px;top:323px;width:440px;height:1px;background:#c0c0c0;"></div><div style="left:287px;top:343px;width:440px;height:1px;background:#c0c0c0;"></div><div style="left:342px;top:304px;width:1px;height:40px;background:#c0c0c0;"></div><div style="left:550px;top:304px;width:1px;height:40px;background:#c0c0c0;"></div><div style="left:661px;top:304px;width:1px;height:40px;background:#c0c0c0;"></div><div style="top:306.475px;height:17.05px;line-height:17.05px;font-size:13.05px;color:#000;font-family:'Liberation Sans',sans-serif;white-space:nowrap;left:288.5px;">Example of writing typical table - tallest buildings in the world (2019):</div><div style="left:287px;top:304px;width:55px;height:21px;border:2px solid #000;box-sizing:border-box;"></div><div style="left:339px;top:322px;width:5px;height:5px;background:#000;"></div><div style="left:287px;top:344px;width:440px;height:39px;background:#d2691e;"></div><div style="left:287px;top:343px;width:440px;height:1px;background:#000;"></div><div style="left:287px;top:345px;width:440px;height:1px;background:#000;"></div><div style="top:355.675px;height:17.05px;line-height:17.05px;font-size:13.05px;color:#fff;font-family:'Liberation Sans',sans-serif;white-space:nowrap;font-weight:bold;left:284.0px;width:60px;text-align:center;transform:scaleX(0.97);transform-origin:center center;">Rank</div><div style="top:355.675px;height:17.05px;line-height:17.05px;font-size:13.05px;color:#fff;font-family:'Liberation Sans',sans-serif;white-space:nowrap;font-weight:bold;left:395.4px;width:100px;text-align:center;transform:scaleX(0.97);transform-origin:center center;">Building</div><div style="top:355.675px;height:17.05px;line-height:17.05px;font-size:13.05px;color:#fff;font-family:'Liberation Sans',sans-serif;white-space:nowrap;font-weight:bold;left:576.0px;width:60px;text-align:center;transform:scaleX(0.97);transform-origin:center center;">City</div><div style="left:287px;top:383px;width:440px;height:20px;background:#87cefa;"></div><div style="left:287px;top:403px;width:440px;height:20px;background:#d3d3e6;"></div><div style="left:287px;top:423px;width:440px;height:20px;background:#87cefa;"></div><div style="left:287px;top:443px;width:440px;height:20px;background:#d3d3e6;"></div><div style="left:287px;top:463px;width:440px;height:20px;background:#87cefa;"></div><div style="left:287px;top:483px;width:440px;height:20px;background:#d3d3e6;"></div><div style="left:287px;top:503px;width:440px;height:20px;background:#87cefa;"></div><div style="left:287px;top:523px;width:440px;height:20px;background:#d3d3e6;"></div><div style="left:287px;top:543px;width:440px;height:20px;background:#87cefa;"></div><div style="left:287px;top:563px;width:440px;height:20px;background:#d3d3e6;"></div><div style="left:287px;top:583px;width:440px;height:20px;background:#87cefa;"></div><div style="left:287px;top:603px;width:440px;height:20px;background:#d3d3e6;"></div><div style="left:287px;top:623px;width:440px;height:20px;background:#87cefa;"></div><div style="left:287px;top:643px;width:440px;height:20px;background:#d3d3e6;"></div><div style="left:287px;top:663px;width:440px;height:20px;background:#87cefa;"></div><div style="left:287px;top:683px;width:440px;height:20px;background:#d3d3e6;"></div><div style="left:287px;top:382px;width:440px;height:1px;background:#000;"></div><div style="left:287px;top:384px;width:440px;height:1px;background:#000;"></div><div style="left:287px;top:582px;width:440px;height:1px;background:#000;"></div><div style="left:287px;top:584px;width:440px;height:1px;background:#000;"></div><div style="left:287px;top:343px;width:1px;height:347px;background:#000;"></div><div style="left:341px;top:385px;width:1px;height:305px;background:#000;"></div><div style="left:550px;top:385px;width:1px;height:305px;background:#000;"></div><div style="left:661px;top:385px;width:1px;height:305px;background:#000;"></div><div style="top:387.27500000000003px;height:17.05px;line-height:17.05px;font-size:13.05px;color:#000;font-family:'Liberation Sans',sans-serif;white-space:nowrap;right:calc(100% - 340.4px);">1</div><div style="top:387.27500000000003px;height:17.05px;line-height:17.05px;font-size:13.05px;color:#000;font-family:'Liberation Sans',sans-serif;white-space:nowrap;left:343px;">Burj Khalifa</div><div style="top:387.27500000000003px;height:17.05px;line-height:17.05px;font-size:13.05px;color:#000;font-family:'Liberation Sans',sans-serif;white-space:nowrap;left:552px;">Dubai</div><div style="top:387.27500000000003px;height:17.05px;line-height:17.05px;font-size:13.05px;color:#000;font-family:'Liberation Sans',sans-serif;white-space:nowrap;left:663px;">United Arab Emirates</div><svg style="left:343px;top:401px;" width="24" height="4" viewBox="0 0 24 4"><path d="M0 1.700 q1.500 -2.600 3 0 t3 0 t3 0 t3 0 t3 0 t3 0 t3 0 t3 0" stroke="#ff0000" stroke-width="1.100" fill="none"/></svg><svg style="left:370px;top:401px;" width="39" height="4" viewBox="0 0 39 4"><path d="M0 1.700 q1.500 -2.600 3 0 t3 0 t3 0 t3 0 t3 0 t3 0 t3 0 t3 0 t3 0 t3 0 t3 0 t3 0 t3 0" stroke="#ff0000" stroke-width="1.100" fill="none"/></svg><div style="top:407.27500000000003px;height:17.05px;line-height:17.05px;font-size:13.05px;color:#000;font-family:'Liberation Sans',sans-serif;white-space:nowrap;right:calc(100% - 340.4px);">2</div><div style="top:407.27500000000003px;height:17.05px;line-height:17.05px;font-size:13.05px;color:#000;font-family:'Liberation Sans',sans-serif;white-space:nowrap;left:343px;">Shanghai Tower</div><div style="top:407.27500000000003px;height:17.05px;line-height:17.05px;font-size:13.05px;color:#000;font-family:'Liberation Sans',sans-serif;white-space:nowrap;left:552px;">Shanghai</div><div style="top:407.27500000000003px;height:17.05px;line-height:17.05px;font-size:13.05px;color:#000;font-family:'Liberation Sans',sans-serif;white-space:nowrap;left:663px;">China</div><div style="top:427.27500000000003px;height:17.05px;line-height:17.05px;font-size:13.05px;color:#000;font-family:'Liberation Sans',sans-serif;white-space:nowrap;right:calc(100% - 340.4px);">3</div><div style="top:427.27500000000003px;height:17.05px;line-height:17.05px;font-size:13.05px;color:#000;font-family:'Liberation Sans',sans-serif;white-space:nowrap;left:343px;">Abraj Al-Bait Clock Tower</div><div style="top:427.27500000000003px;height:17.05px;line-height:17.05px;font-size:13.05px;color:#000;font-family:'Liberation Sans',sans-serif;white-space:nowrap;left:552px;">Mecca</div><div style="top:427.27500000000003px;height:17.05px;line-height:17.05px;font-size:13.05px;color:#000;font-family:'Liberation Sans',sans-serif;white-space:nowrap;left:663px;">Saudi Arabia</div><svg style="left:343px;top:441px;" width="30" height="4" viewBox="0 0 30 4"><path d="M0 1.700 q1.500 -2.600 3 0 t3 0 t3 0 t3 0 t3 0 t3 0 t3 0 t3 0 t3 0 t3 0" stroke="#ff0000" stroke-width="1.100" fill="none"/></svg><div style="top:447.27500000000003px;height:17.05px;line-height:17.05px;font-size:13.05px;color:#000;font-family:'Liberation Sans',sans-serif;white-space:nowrap;right:calc(100% - 340.4px);">4</div><div style="top:447.27500000000003px;height:17.05px;line-height:17.05px;font-size:13.05px;color:#000;font-family:'Liberation Sans',sans-serif;white-space:nowrap;left:343px;">Ping An Finance Centre</div><div style="top:447.27500000000003px;height:17.05px;line-height:17.05px;font-size:13.05px;color:#000;font-family:'Liberation Sans',sans-serif;white-space:nowrap;left:552px;">Shenzhen</div><div style="top:447.27500000000003px;height:17.05px;line-height:17.05px;font-size:13.05px;color:#000;font-family:'Liberation Sans',sans-serif;white-space:nowrap;left:663px;">China</div><svg style="left:442px;top:461px;" width="39" height="4" viewBox="0 0 39 4"><path d="M0 1.700 q1.500 -2.600 3 0 t3 0 t3 0 t3 0 t3 0 t3 0 t3 0 t3 0 t3 0 t3 0 t3 0 t3 0 t3 0" stroke="#ff0000" stroke-width="1.100" fill="none"/></svg><svg style="left:552px;top:461px;" width="57" height="4" viewBox="0 0 57 4"><path d="M0 1.700 q1.500 -2.600 3 0 t3 0 t3 0 t3 0 t3 0 t3 0 t3 0 t3 0 t3 0 t3 0 t3 0 t3 0 t3 0 t3 0 t3 0 t3 0 t3 0 t3 0 t3 0" stroke="#ff0000" stroke-width="1.100" fill="none"/></svg><div style="top:467.27500000000003px;height:17.05px;line-height:17.05px;font-size:13.05px;color:#000;font-family:'Liberation Sans',sans-serif;white-space:nowrap;right:calc(100% - 340.4px);">5</div><div style="top:467.27500000000003px;height:17.05px;line-height:17.05px;font-size:13.05px;color:#000;font-family:'Liberation Sans',sans-serif;white-space:nowrap;left:343px;">Lotte World Tower</div><div style="top:467.27500000000003px;height:17.05px;line-height:17.05px;font-size:13.05px;color:#000;font-family:'Liberation Sans',sans-serif;white-space:nowrap;left:552px;">Seoul</div><div style="top:467.27500000000003px;height:17.05px;line-height:17.05px;font-size:13.05px;color:#000;font-family:'Liberation Sans',sans-serif;white-space:nowrap;left:663px;">South Korea</div><svg style="left:343px;top:481px;" width="30" height="4" viewBox="0 0 30 4"><path d="M0 1.700 q1.500 -2.600 3 0 t3 0 t3 0 t3 0 t3 0 t3 0 t3 0 t3 0 t3 0 t3 0" stroke="#ff0000" stroke-width="1.100" fill="none"/></svg><div style="top:487.27500000000003px;height:17.05px;line-height:17.05px;font-size:13.05px;color:#000;font-family:'Liberation Sans',sans-serif;white-space:nowrap;right:calc(100% - 340.4px);">6</div><div style="top:487.27500000000003px;height:17.05px;line-height:17.05px;font-size:13.05px;color:#000;font-family:'Liberation Sans',sans-serif;white-space:nowrap;left:343px;">One World Trade Center</div><div style="top:487.27500000000003px;height:17.05px;line-height:17.05px;font-size:13.05px;color:#000;font-family:'Liberation Sans',sans-serif;white-space:nowrap;left:552px;">New York City</div><div style="top:487.27500000000003px;height:17.05px;line-height:17.05px;font-size:13.05px;color:#000;font-family:'Liberation Sans',sans-serif;white-space:nowrap;left:663px;">United States</div><div style="top:507.275px;height:17.05px;line-height:17.05px;font-size:13.05px;color:#000;font-family:'Liberation Sans',sans-serif;white-space:nowrap;right:calc(100% - 340.4px);">7</div><div style="top:507.275px;height:17.05px;line-height:17.05px;font-size:13.05px;color:#000;font-family:'Liberation Sans',sans-serif;white-space:nowrap;left:343px;">Guangzhou CTF Finance Centre</div><div style="top:507.275px;height:17.05px;line-height:17.05px;font-size:13.05px;color:#000;font-family:'Liberation Sans',sans-serif;white-space:nowrap;left:552px;">Guangzhou</div><div style="top:507.275px;height:17.05px;line-height:17.05px;font-size:13.05px;color:#000;font-family:'Liberation Sans',sans-serif;white-space:nowrap;left:663px;">China</div><svg style="left:414px;top:521px;" width="24" height="4" viewBox="0 0 24 4"><path d="M0 1.700 q1.500 -2.600 3 0 t3 0 t3 0 t3 0 t3 0 t3 0 t3 0 t3 0" stroke="#ff0000" stroke-width="1.100" fill="none"/></svg><svg style="left:493px;top:521px;" width="39" height="4" viewBox="0 0 39 4"><path d="M0 1.700 q1.500 -2.600 3 0 t3 0 t3 0 t3 0 t3 0 t3 0 t3 0 t3 0 t3 0 t3 0 t3 0 t3 0 t3 0" stroke="#ff0000" stroke-width="1.100" fill="none"/></svg><div style="top:527.275px;height:17.05px;line-height:17.05px;font-size:13.05px;color:#000;font-family:'Liberation Sans',sans-serif;white-space:nowrap;right:calc(100% - 340.4px);">7</div><div style="top:527.275px;height:17.05px;line-height:17.05px;font-size:13.05px;color:#000;font-family:'Liberation Sans',sans-serif;white-space:nowrap;left:343px;">Tianjin CTF Finance Centre</div><div style="top:527.275px;height:17.05px;line-height:17.05px;font-size:13.05px;color:#000;font-family:'Liberation Sans',sans-serif;white-space:nowrap;left:552px;">Tianjin</div><div style="top:527.275px;height:17.05px;line-height:17.05px;font-size:13.05px;color:#000;font-family:'Liberation Sans',sans-serif;white-space:nowrap;left:663px;">China</div><svg style="left:385px;top:541px;" width="24" height="4" viewBox="0 0 24 4"><path d="M0 1.700 q1.500 -2.600 3 0 t3 0 t3 0 t3 0 t3 0 t3 0 t3 0 t3 0" stroke="#ff0000" stroke-width="1.100" fill="none"/></svg><svg style="left:464px;top:541px;" width="39" height="4" viewBox="0 0 39 4"><path d="M0 1.700 q1.500 -2.600 3 0 t3 0 t3 0 t3 0 t3 0 t3 0 t3 0 t3 0 t3 0 t3 0 t3 0 t3 0 t3 0" stroke="#ff0000" stroke-width="1.100" fill="none"/></svg><div style="top:547.275px;height:17.05px;line-height:17.05px;font-size:13.05px;color:#000;font-family:'Liberation Sans',sans-serif;white-space:nowrap;right:calc(100% - 340.4px);">9</div><div style="top:547.275px;height:17.05px;line-height:17.05px;font-size:13.05px;color:#000;font-family:'Liberation Sans',sans-serif;white-space:nowrap;left:343px;">China Zun</div><div style="top:547.275px;height:17.05px;line-height:17.05px;font-size:13.05px;color:#000;font-family:'Liberation Sans',sans-serif;white-space:nowrap;left:552px;">Beijing</div><div style="top:547.275px;height:17.05px;line-height:17.05px;font-size:13.05px;color:#000;font-family:'Liberation Sans',sans-serif;white-space:nowrap;left:663px;">China</div><svg style="left:381px;top:561px;" width="21" height="4" viewBox="0 0 21 4"><path d="M0 1.700 q1.500 -2.600 3 0 t3 0 t3 0 t3 0 t3 0 t3 0 t3 0" stroke="#ff0000" stroke-width="1.100" fill="none"/></svg><div style="top:567.275px;height:17.05px;line-height:17.05px;font-size:13.05px;color:#000;font-family:'Liberation Sans',sans-serif;white-space:nowrap;right:calc(100% - 340.4px);">10</div><div style="top:567.275px;height:17.05px;line-height:17.05px;font-size:13.05px;color:#000;font-family:'Liberation Sans',sans-serif;white-space:nowrap;left:343px;">Taipei 101</div><div style="top:567.275px;height:17.05px;line-height:17.05px;font-size:13.05px;color:#000;font-family:'Liberation Sans',sans-serif;white-space:nowrap;left:552px;">Taipei</div><div style="top:567.275px;height:17.05px;line-height:17.05px;font-size:13.05px;color:#000;font-family:'Liberation Sans',sans-serif;white-space:nowrap;left:663px;">Taiwan</div><div style="top:587.275px;height:17.05px;line-height:17.05px;font-size:13.05px;color:#000;font-family:'Liberation Sans',sans-serif;white-space:nowrap;right:calc(100% - 340.4px);">11</div><div style="top:587.275px;height:17.05px;line-height:17.05px;font-size:13.05px;color:#000;font-family:'Liberation Sans',sans-serif;white-space:nowrap;left:343px;">Shanghai World Financial Center</div><div style="top:587.275px;height:17.05px;line-height:17.05px;font-size:13.05px;color:#000;font-family:'Liberation Sans',sans-serif;white-space:nowrap;left:552px;">Shanghai</div><div style="top:587.275px;height:17.05px;line-height:17.05px;font-size:13.05px;color:#000;font-family:'Liberation Sans',sans-serif;white-space:nowrap;left:663px;">China</div><div style="top:607.275px;height:17.05px;line-height:17.05px;font-size:13.05px;color:#000;font-family:'Liberation Sans',sans-serif;white-space:nowrap;right:calc(100% - 340.4px);">12</div><div style="top:607.275px;height:17.05px;line-height:17.05px;font-size:13.05px;color:#000;font-family:'Liberation Sans',sans-serif;white-space:nowrap;left:343px;">International Commerce Centre</div><div style="top:607.275px;height:17.05px;line-height:17.05px;font-size:13.05px;color:#000;font-family:'Liberation Sans',sans-serif;white-space:nowrap;left:552px;">Hong Kong</div><div style="top:607.275px;height:17.05px;line-height:17.05px;font-size:13.05px;color:#000;font-family:'Liberation Sans',sans-serif;white-space:nowrap;left:663px;">China</div><svg style="left:486px;top:621px;" width="39" height="4" viewBox="0 0 39 4"><path d="M0 1.700 q1.500 -2.600 3 0 t3 0 t3 0 t3 0 t3 0 t3 0 t3 0 t3 0 t3 0 t3 0 t3 0 t3 0 t3 0" stroke="#ff0000" stroke-width="1.100" fill="none"/></svg><div style="top:627.275px;height:17.05px;line-height:17.05px;font-size:13.05px;color:#000;font-family:'Liberation Sans',sans-serif;white-space:nowrap;right:calc(100% - 340.4px);">13</div><div style="top:627.275px;height:17.05px;line-height:17.05px;font-size:13.05px;color:#000;font-family:'Liberation Sans',sans-serif;white-space:nowrap;left:343px;">Lakhta Center</div><div style="top:627.275px;height:17.05px;line-height:17.05px;font-size:13.05px;color:#000;font-family:'Liberation Sans',sans-serif;white-space:nowrap;left:552px;">St. Petersburg</div><div style="top:627.275px;height:17.05px;line-height:17.05px;font-size:13.05px;color:#000;font-family:'Liberation Sans',sans-serif;white-space:nowrap;left:663px;">Russia</div><svg style="left:343px;top:641px;" width="39" height="4" viewBox="0 0 39 4"><path d="M0 1.700 q1.500 -2.600 3 0 t3 0 t3 0 t3 0 t3 0 t3 0 t3 0 t3 0 t3 0 t3 0 t3 0 t3 0 t3 0" stroke="#ff0000" stroke-width="1.100" fill="none"/></svg><svg style="left:572px;top:641px;" width="63" height="4" viewBox="0 0 63 4"><path d="M0 1.700 q1.500 -2.600 3 0 t3 0 t3 0 t3 0 t3 0 t3 0 t3 0 t3 0 t3 0 t3 0 t3 0 t3 0 t3 0 t3 0 t3 0 t3 0 t3 0 t3 0 t3 0 t3 0 t3 0" stroke="#ff0000" stroke-width="1.100" fill="none"/></svg><div style="top:647.275px;height:17.05px;line-height:17.05px;font-size:13.05px;color:#000;font-family:'Liberation Sans',sans-serif;white-space:nowrap;right:calc(100% - 340.4px);">14</div><div style="top:647.275px;height:17.05px;line-height:17.05px;font-size:13.05px;color:#000;font-family:'Liberation Sans',sans-serif;white-space:nowrap;left:343px;">Landmark 81</div><div style="top:647.275px;height:17.05px;line-height:17.05px;font-size:13.05px;color:#000;font-family:'Liberation Sans',sans-serif;white-space:nowrap;left:552px;">Ho Chi Minh City</div><div style="top:647.275px;height:17.05px;line-height:17.05px;font-size:13.05px;color:#000;font-family:'Liberation Sans',sans-serif;white-space:nowrap;left:663px;">Vietnam</div><svg style="left:596px;top:661px;" width="27" height="4" viewBox="0 0 27 4"><path d="M0 1.700 q1.500 -2.600 3 0 t3 0 t3 0 t3 0 t3 0 t3 0 t3 0 t3 0 t3 0" stroke="#ff0000" stroke-width="1.100" fill="none"/></svg><div style="top:667.275px;height:17.05px;line-height:17.05px;font-size:13.05px;color:#000;font-family:'Liberation Sans',sans-serif;white-space:nowrap;right:calc(100% - 340.4px);">15</div><div style="top:667.275px;height:17.05px;line-height:17.05px;font-size:13.05px;color:#000;font-family:'Liberation Sans',sans-serif;white-space:nowrap;left:343px;">Changsha IFS Tower T1</div><div style="top:667.275px;height:17.05px;line-height:17.05px;font-size:13.05px;color:#000;font-family:'Liberation Sans',sans-serif;white-space:nowrap;left:552px;">Changsha</div><div style="top:667.275px;height:17.05px;line-height:17.05px;font-size:13.05px;color:#000;font-family:'Liberation Sans',sans-serif;white-space:nowrap;left:663px;">China</div><div style="left:254px;top:690px;width:470px;height:17px;background:#f0f0f0;"></div><div style="left:272px;top:690px;width:460px;height:17px;background:#cdcdcd;"></div><svg style="left:258px;top:694px;" width="7" height="9" viewBox="0 0 7 9"><path d="M6 0.500 L1.500 4.500 L6 8.500" stroke="#444" stroke-width="1.800" fill="none"/></svg><div style="left:254px;top:707px;width:470px;height:18px;background:#f0f0f0;"></div><div style="left:254px;top:725px;width:470px;height:1px;background:#a0a0a0;"></div><svg style="left:265px;top:711px;" width="8" height="9" viewBox="0 0 8 9"><path d="M1 0 V9" stroke="#aaa" stroke-width="1.300"/><path d="M7.500 0 V9 L2.500 4.500Z" fill="#aaa"/></svg><svg style="left:283px;top:711px;" width="6" height="9" viewBox="0 0 6 9"><path d="M5.500 0 V9 L0.500 4.500Z" fill="#aaa"/></svg><svg style="left:300px;top:711px;" width="6" height="9" viewBox="0 0 6 9"><path d="M0.500 0 V9 L5.500 4.500Z" fill="#aaa"/></svg><svg style="left:315px;top:711px;" width="8" height="9" viewBox="0 0 8 9"><path d="M7 0 V9" stroke="#aaa" stroke-width="1.300"/><path d="M0.500 0 V9 L5.500 4.500Z" fill="#aaa"/></svg><svg style="left:337px;top:710px;" width="11" height="11" viewBox="0 0 11 11"><path d="M5.500 0.500 V10.500 M0.500 5.500 H10.500" stroke="#000" stroke-width="2.600"/></svg><div style="left:357px;top:707px;width:67px;height:18px;background:#fff;border:1px solid #666;border-top:none;box-sizing:border-box;"></div><div style="top:708.25px;height:16.5px;line-height:16.5px;font-size:12.5px;color:#000;font-family:'Liberation Sans',sans-serif;white-space:nowrap;font-weight:bold;left:357.0px;width:66px;text-align:center;">Writing</div><div style="left:254px;top:726px;width:470px;height:21px;background:#f0f0f0;"></div><div style="top:729.35px;height:16.3px;line-height:16.3px;font-size:12.3px;color:#000;font-family:'Liberation Sans',sans-serif;white-space:nowrap;left:265px;transform:scaleX(0.96);transform-origin:left center;">Sheet 1 of 1</div><div style="left:432px;top:729px;width:1px;height:16px;background:#a0a0a0;"></div><div style="left:606px;top:729px;width:1px;height:16px;background:#a0a0a0;"></div><div style="top:729.35px;height:16.3px;line-height:16.3px;font-size:12.3px;color:#000;font-family:'Liberation Sans',sans-serif;white-space:nowrap;left:616px;transform:scaleX(0.96);transform-origin:left center;">GemName2</div></div></div>
<div class="win" style="left:674px;top:78px;width:868px;height:722px;box-shadow:0 1px 16px 0 rgba(0,0,0,.22);z-index:3"><div class="in" style="left:-674px;top:-78px"><div style="left:674px;top:78px;width:868px;height:722px;background:#fff;"></div><div style="left:675px;top:79px;width:866px;height:42px;background:#dee1e6;"></div><div style="left:683px;top:87px;width:240px;height:34px;background:#fff;border-radius:8px 8px 0 0;"></div><svg style="left:675px;top:113px;" width="8" height="8" viewBox="0 0 8 8"><path d="M8 0 V8 H0 A8 8 0 0 0 8 0Z" fill="#fff"/></svg><svg style="left:923px;top:113px;" width="8" height="8" viewBox="0 0 8 8"><path d="M0 0 V8 H8 A8 8 0 0 1 0 0Z" fill="#fff"/></svg><svg style="left:696px;top:97px;" width="14" height="14" viewBox="0 0 14 14"><circle cx="7" cy="7" r="7" fill="#5f6368"/><path d="M1.300 5.200 C2.600 4.600 4.200 4.700 5 5.600 C5.800 6.500 7.200 6.300 7.600 7.300 C8 8.300 6.600 8.900 5.500 8.600 C4.400 8.300 3.600 9.200 3.900 10.300 C4.100 11.100 4.900 11.700 5.600 12.200 C3.400 11.800 1.600 10 1.200 7.800 C1.050 6.900 1.100 6 1.300 5.200 Z M7.200 1.200 C9.300 1.200 11.300 2.500 12.200 4.300 C11.600 5.300 10.400 5.500 9.600 4.900 C8.800 4.300 7.400 4.600 6.900 3.700 C6.400 2.800 6.600 1.800 7.200 1.200 Z M12.700 6.400 C12.900 8.300 12.100 10.200 10.700 11.400 C10 10.600 10.300 9.400 11 8.700 C11.600 8.100 11.800 7 12.700 6.400 Z" fill="#fff"/></svg><div style="top:96.0px;height:16px;line-height:16px;font-size:12px;color:#45474a;font-family:'Liberation Sans',sans-serif;white-space:nowrap;left:719px;transform:scaleX(1.04);transform-origin:left center;">Writing</div><svg style="left:901px;top:98px;" width="12" height="12" viewBox="0 0 12 12"><path d="M2 2 L10 10 M10 2 L2 10" stroke="#333" stroke-width="1.6" fill="none"/></svg><svg style="left:938px;top:97px;" width="14" height="14" viewBox="0 0 14 14"><path d="M7 1 V13 M1 7 H13" stroke="#333" stroke-width="2" fill="none"/></svg><div style="left:1421px;top:93px;width:10px;height:1px;background:#000;"></div><div style="left:1467px;top:88px;width:10px;height:10px;border:1px solid #000;box-sizing:border-box;"></div><svg style="left:1512.5px;top:87.5px;" width="11" height="11" viewBox="0 0 11 11"><path d="M0.500 0.500 L10.500 10.500 M10.500 0.500 L0.500 10.500" stroke="#000" stroke-width="1.1" fill="none"/></svg><div style="left:675px;top:121px;width:866px;height:36px;background:#fff;"></div><div style="left:675px;top:157px;width:866px;height:1px;background:#d5d7db;"></div><svg style="left:689px;top:131px;" width="16" height="16" viewBox="0 0 16 16"><path d="M15 8 H2.500 M8 2 L2 8 L8 14" stroke="#babcbe" stroke-width="1.800" fill="none"/></svg><svg style="left:721px;top:131px;" width="16" height="16" viewBox="0 0 16 16"><path d="M1 8 H13.500 M8 2 L14 8 L8 14" stroke="#babcbe" stroke-width="1.800" fill="none"/></svg><svg style="left:753px;top:130.5px;" width="17" height="17" viewBox="0 0 17 17"><path d="M14 8.500 A6 6 0 1 1 12.200 4.200" stroke="#5f6368" stroke-width="2" fill="none"/><path d="M15 1.500 V7.500 H9 Z" fill="#5f6368"/></svg><div style="left:783px;top:125px;width:682px;height:28px;background:#f1f3f4;border-radius:14px;"></div><div style="left:793px;top:131px;width:16px;height:16px;background:#fff;border-radius:50%;"></div><svg style="left:794px;top:132px;" width="14" height="14" viewBox="0 0 14 14"><path d="M7 1 A6 6 0 0 1 11.300 2.800 L9.600 4.400 A3.700 3.700 0 0 0 7 3.300 Z" fill="#ea4335"/><path d="M7 1 A6 6 0 0 0 1.700 4.200 L3.700 5.700 A3.700 3.700 0 0 1 7 3.300 Z" fill="#ea4335"/><path d="M1.700 4.200 A6 6 0 0 0 1.700 9.800 L3.700 8.300 A3.700 3.700 0 0 1 3.700 5.700 Z" fill="#fbbc05"/><path d="M1.700 9.800 A6 6 0 0 0 11 11.500 L9.100 10 A3.700 3.700 0 0 1 3.700 8.300 Z" fill="#34a853"/><path d="M7 5.800 H12.800 A6 6 0 0 1 11 11.500 L9.100 10 A3.500 3.500 0 0 0 10.400 8.100 H7 Z" fill="#4285f4"/></svg><div style="top:129.7px;height:18px;line-height:18px;font-size:14px;color:#202124;font-family:'Liberation Sans',sans-serif;white-space:nowrap;left:817px;">Convert.html</div><div style="left:1517.5px;top:132.5px;width:3px;height:3px;background:#5f6368;border-radius:50%;"></div><div style="left:1517.5px;top:137.5px;width:3px;height:3px;background:#5f6368;border-radius:50%;"></div><div style="left:1517.5px;top:142.5px;width:3px;height:3px;background:#5f6368;border-radius:50%;"></div><div style="top:167.9px;height:17.2px;line-height:17.2px;font-size:13.2px;color:#000;font-family:'Liberation Sans',sans-serif;white-space:nowrap;left:683px;transform:scaleX(1.0522);transform-origin:left center;">Example of writing typical table - tallest buildings in the world (2019):</div><div style="left:683px;top:206px;width:784px;height:40px;background:#d2691e;"></div><div style="left:683px;top:246px;width:785px;height:20px;background:#87cefa;"></div><div style="left:683px;top:266px;width:785px;height:20px;background:#d3d3e6;"></div><div style="left:683px;top:286px;width:785px;height:20px;background:#87cefa;"></div><div style="left:683px;top:306px;width:785px;height:20px;background:#d3d3e6;"></div><div style="left:683px;top:326px;width:785px;height:20px;background:#87cefa;"></div><div style="left:683px;top:346px;width:785px;height:20px;background:#d3d3e6;"></div><div style="left:683px;top:366px;width:785px;height:20px;background:#87cefa;"></div><div style="left:683px;top:386px;width:785px;height:20px;background:#d3d3e6;"></div><div style="left:683px;top:406px;width:785px;height:20px;background:#87cefa;"></div><div style="left:683px;top:426px;width:785px;height:20px;background:#d3d3e6;"></div><div style="left:683px;top:446px;width:785px;height:20px;background:#87cefa;"></div><div style="left:683px;top:466px;width:785px;height:20px;background:#d3d3e6;"></div><div style="left:683px;top:486px;width:785px;height:20px;background:#87cefa;"></div><div style="left:683px;top:506px;width:785px;height:20px;background:#d3d3e6;"></div><div style="left:683px;top:526px;width:785px;height:20px;background:#87cefa;"></div><div style="left:683px;top:546px;width:785px;height:20px;background:#d3d3e6;"></div><div style="left:683px;top:566px;width:785px;height:20px;background:#87cefa;"></div><div style="left:683px;top:586px;width:785px;height:20px;background:#d3d3e6;"></div><div style="left:683px;top:606px;width:785px;height:20px;background:#87cefa;"></div><div style="left:683px;top:626px;width:785px;height:20px;background:#d3d3e6;"></div><div style="left:1468px;top:246px;width:27px;height:200px;background:#00ff00;"></div><div style="left:1468px;top:446px;width:27px;height:200px;background:#ffd700;"></div><div style="left:1495px;top:246px;width:35px;height:400px;background:#ffd700;"></div><div style="left:682px;top:205px;width:787px;height:1px;background:#000;"></div><div style="left:682px;top:207px;width:787px;height:1px;background:#000;"></div><div style="left:682px;top:245px;width:850px;height:1px;background:#000;"></div><div style="left:682px;top:247px;width:850px;height:1px;background:#000;"></div><div style="left:682px;top:445px;width:814px;height:1px;background:#000;"></div><div style="left:682px;top:447px;width:814px;height:1px;background:#000;"></div><div style="left:682px;top:645px;width:850px;height:1px;background:#000;"></div><div style="left:682px;top:647px;width:850px;height:1px;background:#000;"></div><div style="left:682px;top:205px;width:1px;height:443px;background:#000;"></div><div style="left:684px;top:205px;width:1px;height:443px;background:#000;"></div><div style="left:1466px;top:205px;width:1px;height:42px;background:#000;"></div><div style="left:1468px;top:205px;width:1px;height:42px;background:#000;"></div><div style="left:1494px;top:245px;width:1px;height:403px;background:#000;"></div><div style="left:1496px;top:245px;width:1px;height:403px;background:#000;"></div><div style="left:1529px;top:245px;width:1px;height:403px;background:#000;"></div><div style="left:1531px;top:245px;width:1px;height:403px;background:#000;"></div><div style="left:739px;top:247px;width:1px;height:398px;background:#000;"></div><div style="left:949px;top:247px;width:1px;height:398px;background:#000;"></div><div style="left:1061px;top:247px;width:1px;height:398px;background:#000;"></div><div style="left:1201px;top:247px;width:1px;height:398px;background:#000;"></div><div style="left:1264px;top:247px;width:1px;height:398px;background:#000;"></div><div style="left:1341px;top:247px;width:1px;height:398px;background:#000;"></div><div style="left:1404px;top:247px;width:1px;height:398px;background:#000;"></div><div style="top:218.0px;height:17.2px;line-height:17.2px;font-size:13.2px;color:#fff;font-family:'Liberation Sans',sans-serif;white-space:nowrap;font-weight:bold;left:651.5px;width:120px;text-align:center;transform:scaleX(0.9697);transform-origin:center center;">Rank</div><div style="top:218.0px;height:17.2px;line-height:17.2px;font-size:13.2px;color:#fff;font-family:'Liberation Sans',sans-serif;white-space:nowrap;font-weight:bold;left:783.5px;width:120px;text-align:center;transform:scaleX(0.9529);transform-origin:center center;">Building</div><div style="top:218.0px;height:17.2px;line-height:17.2px;font-size:13.2px;color:#fff;font-family:'Liberation Sans',sans-serif;white-space:nowrap;font-weight:bold;left:944.3px;width:120px;text-align:center;transform:scaleX(0.9624);transform-origin:center center;">City</div><div style="top:218.0px;height:17.2px;line-height:17.2px;font-size:13.2px;color:#fff;font-family:'Liberation Sans',sans-serif;white-space:nowrap;font-weight:bold;left:1071.0px;width:120px;text-align:center;transform:scaleX(0.9763);transform-origin:center center;">Country</div><div style="top:209.0px;height:17.2px;line-height:17.2px;font-size:13.2px;color:#fff;font-family:'Liberation Sans',sans-serif;white-space:nowrap;font-weight:bold;left:1210.7px;width:120px;text-align:center;transform:scaleX(0.996);transform-origin:center center;">Height</div><div style="top:226.9px;height:17.2px;line-height:17.2px;font-size:13.2px;color:#fff;font-family:'Liberation Sans',sans-serif;white-space:nowrap;font-weight:bold;left:1172.5px;width:120px;text-align:center;transform:scaleX(1.052);transform-origin:center center;">Metric</div><div style="top:226.9px;height:17.2px;line-height:17.2px;font-size:13.2px;color:#fff;font-family:'Liberation Sans',sans-serif;white-space:nowrap;font-weight:bold;left:1242.4px;width:120px;text-align:center;transform:scaleX(1.0213);transform-origin:center center;">Imperial</div><div style="top:218.0px;height:17.2px;line-height:17.2px;font-size:13.2px;color:#fff;font-family:'Liberation Sans',sans-serif;white-space:nowrap;font-weight:bold;left:1312.2px;width:120px;text-align:center;transform:scaleX(0.9198);transform-origin:center center;">Floors</div><div style="top:209.0px;height:17.2px;line-height:17.2px;font-size:13.2px;color:#fff;font-family:'Liberation Sans',sans-serif;white-space:nowrap;font-weight:bold;left:1375.0px;width:120px;text-align:center;transform:scaleX(0.982);transform-origin:center center;">Built</div><div style="top:226.9px;height:17.2px;line-height:17.2px;font-size:13.2px;color:#fff;font-family:'Liberation Sans',sans-serif;white-space:nowrap;font-weight:bold;left:1375.0px;width:120px;text-align:center;transform:scaleX(0.9676);transform-origin:center center;">(Year)</div><div style="top:248.9px;height:17.2px;line-height:17.2px;font-size:13.2px;color:#000;font-family:'Liberation Sans',sans-serif;white-space:nowrap;right:calc(100% - 739px);transform:scaleX(1.0308);transform-origin:right center;">1</div><div style="top:248.9px;height:17.2px;line-height:17.2px;font-size:13.2px;color:#000;font-family:'Liberation Sans',sans-serif;white-space:nowrap;left:740px;transform:scaleX(1.0286);transform-origin:left center;">Burj Khalifa</div><div style="top:248.9px;height:17.2px;line-height:17.2px;font-size:13.2px;color:#000;font-family:'Liberation Sans',sans-serif;white-space:nowrap;left:950px;transform:scaleX(1.0279);transform-origin:left center;">Dubai</div><div style="top:248.9px;height:17.2px;line-height:17.2px;font-size:13.2px;color:#000;font-family:'Liberation Sans',sans-serif;white-space:nowrap;left:1062.5px;transform:scaleX(1.0422);transform-origin:left center;">United Arab Emirates</div><div style="top:247.36499999999998px;height:18.67px;line-height:18.67px;font-size:14.67px;color:#1a1a1a;font-family:'Liberation Mono',monospace;white-space:nowrap;right:calc(100% - 1264px);">828 m</div><div style="top:247.36499999999998px;height:18.67px;line-height:18.67px;font-size:14.67px;color:#1a1a1a;font-family:'Liberation Mono',monospace;white-space:nowrap;right:calc(100% - 1340.5px);">2717 ft</div><div style="top:247.36499999999998px;height:18.67px;line-height:18.67px;font-size:14.67px;color:#1a1a1a;font-family:'Liberation Mono',monospace;white-space:nowrap;right:calc(100% - 1403.5px);">163</div><div style="top:247.36499999999998px;height:18.67px;line-height:18.67px;font-size:14.67px;color:#1a1a1a;font-family:'Liberation Mono',monospace;white-space:nowrap;right:calc(100% - 1466.5px);">2010</div><div style="top:267.9px;height:17.2px;line-height:17.2px;font-size:13.2px;color:#000;font-family:'Liberation Sans',sans-serif;white-space:nowrap;right:calc(100% - 739px);transform:scaleX(1.0308);transform-origin:right center;">2</div><div style="top:267.9px;height:17.2px;line-height:17.2px;font-size:13.2px;color:#000;font-family:'Liberation Sans',sans-serif;white-space:nowrap;left:740px;transform:scaleX(1.0271);transform-origin:left center;">Shanghai Tower</div><div style="top:267.9px;height:17.2px;line-height:17.2px;font-size:13.2px;color:#000;font-family:'Liberation Sans',sans-serif;white-space:nowrap;left:950px;transform:scaleX(0.9886);transform-origin:left center;">Shanghai</div><div style="top:267.9px;height:17.2px;line-height:17.2px;font-size:13.2px;color:#000;font-family:'Liberation Sans',sans-serif;white-space:nowrap;left:1062.5px;transform:scaleX(0.9924);transform-origin:left center;">China</div><div style="top:266.365px;height:18.67px;line-height:18.67px;font-size:14.67px;color:#1a1a1a;font-family:'Liberation Mono',monospace;white-space:nowrap;right:calc(100% - 1264px);">632 m</div><div style="top:266.365px;height:18.67px;line-height:18.67px;font-size:14.67px;color:#1a1a1a;font-family:'Liberation Mono',monospace;white-space:nowrap;right:calc(100% - 1340.5px);">2073 ft</div><div style="top:266.365px;height:18.67px;line-height:18.67px;font-size:14.67px;color:#1a1a1a;font-family:'Liberation Mono',monospace;white-space:nowrap;right:calc(100% - 1403.5px);">128</div><div style="top:266.365px;height:18.67px;line-height:18.67px;font-size:14.67px;color:#1a1a1a;font-family:'Liberation Mono',monospace;white-space:nowrap;right:calc(100% - 1466.5px);">2015</div><div style="top:287.9px;height:17.2px;line-height:17.2px;font-size:13.2px;color:#000;font-family:'Liberation Sans',sans-serif;white-space:nowrap;right:calc(100% - 739px);transform:scaleX(1.0308);transform-origin:right center;">3</div><div style="top:287.9px;height:17.2px;line-height:17.2px;font-size:13.2px;color:#000;font-family:'Liberation Sans',sans-serif;white-space:nowrap;left:740px;transform:scaleX(1.0388);transform-origin:left center;">Abraj Al-Bait Clock Tower</div><div style="top:287.9px;height:17.2px;line-height:17.2px;font-size:13.2px;color:#000;font-family:'Liberation Sans',sans-serif;white-space:nowrap;left:950px;transform:scaleX(1.0282);transform-origin:left center;">Mecca</div><div style="top:287.9px;height:17.2px;line-height:17.2px;font-size:13.2px;color:#000;font-family:'Liberation Sans',sans-serif;white-space:nowrap;left:1062.5px;transform:scaleX(1.0142);transform-origin:left center;">Saudi Arabia</div><div style="top:286.365px;height:18.67px;line-height:18.67px;font-size:14.67px;color:#1a1a1a;font-family:'Liberation Mono',monospace;white-space:nowrap;right:calc(100% - 1264px);">601 m</div><div style="top:286.365px;height:18.67px;line-height:18.67px;font-size:14.67px;color:#1a1a1a;font-family:'Liberation Mono',monospace;white-space:nowrap;right:calc(100% - 1340.5px);">1971 ft</div><div style="top:286.365px;height:18.67px;line-height:18.67px;font-size:14.67px;color:#1a1a1a;font-family:'Liberation Mono',monospace;white-space:nowrap;right:calc(100% - 1403.5px);">120</div><div style="top:286.365px;height:18.67px;line-height:18.67px;font-size:14.67px;color:#1a1a1a;font-family:'Liberation Mono',monospace;white-space:nowrap;right:calc(100% - 1466.5px);">2012</div><div style="top:307.9px;height:17.2px;line-height:17.2px;font-size:13.2px;color:#000;font-family:'Liberation Sans',sans-serif;white-space:nowrap;right:calc(100% - 739px);transform:scaleX(1.0308);transform-origin:right center;">4</div><div style="top:307.9px;height:17.2px;line-height:17.2px;font-size:13.2px;color:#000;font-family:'Liberation Sans',sans-serif;white-space:nowrap;left:740px;transform:scaleX(1.0068);transform-origin:left center;">Ping An Finance Centre</div><div style="top:307.9px;height:17.2px;line-height:17.2px;font-size:13.2px;color:#000;font-family:'Liberation Sans',sans-serif;white-space:nowrap;left:950px;transform:scaleX(0.9923);transform-origin:left center;">Shenzhen</div><div style="top:307.9px;height:17.2px;line-height:17.2px;font-size:13.2px;color:#000;font-family:'Liberation Sans',sans-serif;white-space:nowrap;left:1062.5px;transform:scaleX(0.9924);transform-origin:left center;">China</div><div style="top:306.365px;height:18.67px;line-height:18.67px;font-size:14.67px;color:#1a1a1a;font-family:'Liberation Mono',monospace;white-space:nowrap;right:calc(100% - 1264px);">599 m</div><div style="top:306.365px;height:18.67px;line-height:18.67px;font-size:14.67px;color:#1a1a1a;font-family:'Liberation Mono',monospace;white-space:nowrap;right:calc(100% - 1340.5px);">1965 ft</div><div style="top:306.365px;height:18.67px;line-height:18.67px;font-size:14.67px;color:#1a1a1a;font-family:'Liberation Mono',monospace;white-space:nowrap;right:calc(100% - 1403.5px);">115</div><div style="top:306.365px;height:18.67px;line-height:18.67px;font-size:14.67px;color:#1a1a1a;font-family:'Liberation Mono',monospace;white-space:nowrap;right:calc(100% - 1466.5px);">2017</div><div style="top:327.9px;height:17.2px;line-height:17.2px;font-size:13.2px;color:#000;font-family:'Liberation Sans',sans-serif;white-space:nowrap;right:calc(100% - 739px);transform:scaleX(1.0308);transform-origin:right center;">5</div><div style="top:327.9px;height:17.2px;line-height:17.2px;font-size:13.2px;color:#000;font-family:'Liberation Sans',sans-serif;white-space:nowrap;left:740px;transform:scaleX(1.0805);transform-origin:left center;">Lotte World Tower</div><div style="top:327.9px;height:17.2px;line-height:17.2px;font-size:13.2px;color:#000;font-family:'Liberation Sans',sans-serif;white-space:nowrap;left:950px;transform:scaleX(0.9903);transform-origin:left center;">Seoul</div><div style="top:327.9px;height:17.2px;line-height:17.2px;font-size:13.2px;color:#000;font-family:'Liberation Sans',sans-serif;white-space:nowrap;left:1062.5px;transform:scaleX(1.0113);transform-origin:left center;">South Korea</div><div style="top:326.365px;height:18.67px;line-height:18.67px;font-size:14.67px;color:#1a1a1a;font-family:'Liberation Mono',monospace;white-space:nowrap;right:calc(100% - 1264px);">555 m</div><div style="top:326.365px;height:18.67px;line-height:18.67px;font-size:14.67px;color:#1a1a1a;font-family:'Liberation Mono',monospace;white-space:nowrap;right:calc(100% - 1340.5px);">1819 ft</div><div style="top:326.365px;height:18.67px;line-height:18.67px;font-size:14.67px;color:#1a1a1a;font-family:'Liberation Mono',monospace;white-space:nowrap;right:calc(100% - 1403.5px);">123</div><div style="top:326.365px;height:18.67px;line-height:18.67px;font-size:14.67px;color:#1a1a1a;font-family:'Liberation Mono',monospace;white-space:nowrap;right:calc(100% - 1466.5px);">2016</div><div style="top:347.9px;height:17.2px;line-height:17.2px;font-size:13.2px;color:#000;font-family:'Liberation Sans',sans-serif;white-space:nowrap;right:calc(100% - 739px);transform:scaleX(1.0308);transform-origin:right center;">6</div><div style="top:347.9px;height:17.2px;line-height:17.2px;font-size:13.2px;color:#000;font-family:'Liberation Sans',sans-serif;white-space:nowrap;left:740px;transform:scaleX(1.0358);transform-origin:left center;">One World Trade Center</div><div style="top:347.9px;height:17.2px;line-height:17.2px;font-size:13.2px;color:#000;font-family:'Liberation Sans',sans-serif;white-space:nowrap;left:950px;transform:scaleX(1.0318);transform-origin:left center;">New York City</div><div style="top:347.9px;height:17.2px;line-height:17.2px;font-size:13.2px;color:#000;font-family:'Liberation Sans',sans-serif;white-space:nowrap;left:1062.5px;transform:scaleX(1.032);transform-origin:left center;">United States</div><div style="top:346.365px;height:18.67px;line-height:18.67px;font-size:14.67px;color:#1a1a1a;font-family:'Liberation Mono',monospace;white-space:nowrap;right:calc(100% - 1264px);">541 m</div><div style="top:346.365px;height:18.67px;line-height:18.67px;font-size:14.67px;color:#1a1a1a;font-family:'Liberation Mono',monospace;white-space:nowrap;right:calc(100% - 1340.5px);">1776 ft</div><div style="top:346.365px;height:18.67px;line-height:18.67px;font-size:14.67px;color:#1a1a1a;font-family:'Liberation Mono',monospace;white-space:nowrap;right:calc(100% - 1403.5px);">104</div><div style="top:346.365px;height:18.67px;line-height:18.67px;font-size:14.67px;color:#1a1a1a;font-family:'Liberation Mono',monospace;white-space:nowrap;right:calc(100% - 1466.5px);">2014</div><div style="top:367.9px;height:17.2px;line-height:17.2px;font-size:13.2px;color:#000;font-family:'Liberation Sans',sans-serif;white-space:nowrap;right:calc(100% - 739px);transform:scaleX(1.0308);transform-origin:right center;">7</div><div style="top:367.9px;height:17.2px;line-height:17.2px;font-size:13.2px;color:#000;font-family:'Liberation Sans',sans-serif;white-space:nowrap;left:740px;transform:scaleX(0.9855);transform-origin:left center;">Guangzhou CTF Finance Centre</div><div style="top:367.9px;height:17.2px;line-height:17.2px;font-size:13.2px;color:#000;font-family:'Liberation Sans',sans-serif;white-space:nowrap;left:950px;transform:scaleX(1.0072);transform-origin:left center;">Guangzhou</div><div style="top:367.9px;height:17.2px;line-height:17.2px;font-size:13.2px;color:#000;font-family:'Liberation Sans',sans-serif;white-space:nowrap;left:1062.5px;transform:scaleX(0.9924);transform-origin:left center;">China</div><div style="top:366.365px;height:18.67px;line-height:18.67px;font-size:14.67px;color:#1a1a1a;font-family:'Liberation Mono',monospace;white-space:nowrap;right:calc(100% - 1264px);">530 m</div><div style="top:366.365px;height:18.67px;line-height:18.67px;font-size:14.67px;color:#1a1a1a;font-family:'Liberation Mono',monospace;white-space:nowrap;right:calc(100% - 1340.5px);">1739 ft</div><div style="top:366.365px;height:18.67px;line-height:18.67px;font-size:14.67px;color:#1a1a1a;font-family:'Liberation Mono',monospace;white-space:nowrap;right:calc(100% - 1403.5px);">111</div><div style="top:366.365px;height:18.67px;line-height:18.67px;font-size:14.67px;color:#1a1a1a;font-family:'Liberation Mono',monospace;white-space:nowrap;right:calc(100% - 1466.5px);">2016</div><div style="top:387.9px;height:17.2px;line-height:17.2px;font-size:13.2px;color:#000;font-family:'Liberation Sans',sans-serif;white-space:nowrap;right:calc(100% - 739px);transform:scaleX(1.0308);transform-origin:right center;">7</div><div style="top:387.9px;height:17.2px;line-height:17.2px;font-size:13.2px;color:#000;font-family:'Liberation Sans',sans-serif;white-space:nowrap;left:740px;transform:scaleX(0.993);transform-origin:left center;">Tianjin CTF Finance Centre</div><div style="top:387.9px;height:17.2px;line-height:17.2px;font-size:13.2px;color:#000;font-family:'Liberation Sans',sans-serif;white-space:nowrap;left:950px;transform:scaleX(1.0559);transform-origin:left center;">Tianjin</div><div style="top:387.9px;height:17.2px;line-height:17.2px;font-size:13.2px;color:#000;font-family:'Liberation Sans',sans-serif;white-space:nowrap;left:1062.5px;transform:scaleX(0.9924);transform-origin:left center;">China</div><div style="top:386.365px;height:18.67px;line-height:18.67px;font-size:14.67px;color:#1a1a1a;font-family:'Liberation Mono',monospace;white-space:nowrap;right:calc(100% - 1264px);">530 m</div><div style="top:386.365px;height:18.67px;line-height:18.67px;font-size:14.67px;color:#1a1a1a;font-family:'Liberation Mono',monospace;white-space:nowrap;right:calc(100% - 1340.5px);">1739 ft</div><div style="top:386.365px;height:18.67px;line-height:18.67px;font-size:14.67px;color:#1a1a1a;font-family:'Liberation Mono',monospace;white-space:nowrap;right:calc(100% - 1403.5px);">98</div><div style="top:386.365px;height:18.67px;line-height:18.67px;font-size:14.67px;color:#1a1a1a;font-family:'Liberation Mono',monospace;white-space:nowrap;right:calc(100% - 1466.5px);">2018</div><div style="top:407.9px;height:17.2px;line-height:17.2px;font-size:13.2px;color:#000;font-family:'Liberation Sans',sans-serif;white-space:nowrap;right:calc(100% - 739px);transform:scaleX(1.0308);transform-origin:right center;">9</div><div style="top:407.9px;height:17.2px;line-height:17.2px;font-size:13.2px;color:#000;font-family:'Liberation Sans',sans-serif;white-space:nowrap;left:740px;transform:scaleX(0.9899);transform-origin:left center;">China Zun</div><div style="top:407.9px;height:17.2px;line-height:17.2px;font-size:13.2px;color:#000;font-family:'Liberation Sans',sans-serif;white-space:nowrap;left:950px;transform:scaleX(1.0308);transform-origin:left center;">Beijing</div><div style="top:407.9px;height:17.2px;line-height:17.2px;font-size:13.2px;color:#000;font-family:'Liberation Sans',sans-serif;white-space:nowrap;left:1062.5px;transform:scaleX(0.9924);transform-origin:left center;">China</div><div style="top:406.365px;height:18.67px;line-height:18.67px;font-size:14.67px;color:#1a1a1a;font-family:'Liberation Mono',monospace;white-space:nowrap;right:calc(100% - 1264px);">528 m</div><div style="top:406.365px;height:18.67px;line-height:18.67px;font-size:14.67px;color:#1a1a1a;font-family:'Liberation Mono',monospace;white-space:nowrap;right:calc(100% - 1340.5px);">1732 ft</div><div style="top:406.365px;height:18.67px;line-height:18.67px;font-size:14.67px;color:#1a1a1a;font-family:'Liberation Mono',monospace;white-space:nowrap;right:calc(100% - 1403.5px);">108</div><div style="top:406.365px;height:18.67px;line-height:18.67px;font-size:14.67px;color:#1a1a1a;font-family:'Liberation Mono',monospace;white-space:nowrap;right:calc(100% - 1466.5px);">2018</div><div style="top:427.4px;height:17.2px;line-height:17.2px;font-size:13.2px;color:#000;font-family:'Liberation Sans',sans-serif;white-space:nowrap;right:calc(100% - 739px);transform:scaleX(1.0308);transform-origin:right center;">10</div><div style="top:427.4px;height:17.2px;line-height:17.2px;font-size:13.2px;color:#000;font-family:'Liberation Sans',sans-serif;white-space:nowrap;left:740px;transform:scaleX(1.0407);transform-origin:left center;">Taipei 101</div><div style="top:427.4px;height:17.2px;line-height:17.2px;font-size:13.2px;color:#000;font-family:'Liberation Sans',sans-serif;white-space:nowrap;left:950px;transform:scaleX(1.0599);transform-origin:left center;">Taipei</div><div style="top:427.4px;height:17.2px;line-height:17.2px;font-size:13.2px;color:#000;font-family:'Liberation Sans',sans-serif;white-space:nowrap;left:1062.5px;transform:scaleX(1.0592);transform-origin:left center;">Taiwan</div><div style="top:425.865px;height:18.67px;line-height:18.67px;font-size:14.67px;color:#1a1a1a;font-family:'Liberation Mono',monospace;white-space:nowrap;right:calc(100% - 1264px);">508 m</div><div style="top:425.865px;height:18.67px;line-height:18.67px;font-size:14.67px;color:#1a1a1a;font-family:'Liberation Mono',monospace;white-space:nowrap;right:calc(100% - 1340.5px);">1667 ft</div><div style="top:425.865px;height:18.67px;line-height:18.67px;font-size:14.67px;color:#1a1a1a;font-family:'Liberation Mono',monospace;white-space:nowrap;right:calc(100% - 1403.5px);">101</div><div style="top:425.865px;height:18.67px;line-height:18.67px;font-size:14.67px;color:#1a1a1a;font-family:'Liberation Mono',monospace;white-space:nowrap;right:calc(100% - 1466.5px);">2004</div><div style="top:448.9px;height:17.2px;line-height:17.2px;font-size:13.2px;color:#000;font-family:'Liberation Sans',sans-serif;white-space:nowrap;right:calc(100% - 739px);transform:scaleX(1.1045);transform-origin:right center;">11</div><div style="top:448.9px;height:17.2px;line-height:17.2px;font-size:13.2px;color:#000;font-family:'Liberation Sans',sans-serif;white-space:nowrap;left:740px;transform:scaleX(1.0194);transform-origin:left center;">Shanghai World Financial Center</div><div style="top:448.9px;height:17.2px;line-height:17.2px;font-size:13.2px;color:#000;font-family:'Liberation Sans',sans-serif;white-space:nowrap;left:950px;transform:scaleX(0.9886);transform-origin:left center;">Shanghai</div><div style="top:448.9px;height:17.2px;line-height:17.2px;font-size:13.2px;color:#000;font-family:'Liberation Sans',sans-serif;white-space:nowrap;left:1062.5px;transform:scaleX(0.9924);transform-origin:left center;">China</div><div style="top:447.365px;height:18.67px;line-height:18.67px;font-size:14.67px;color:#1a1a1a;font-family:'Liberation Mono',monospace;white-space:nowrap;right:calc(100% - 1264px);">492 m</div><div style="top:447.365px;height:18.67px;line-height:18.67px;font-size:14.67px;color:#1a1a1a;font-family:'Liberation Mono',monospace;white-space:nowrap;right:calc(100% - 1340.5px);">1614 ft</div><div style="top:447.365px;height:18.67px;line-height:18.67px;font-size:14.67px;color:#1a1a1a;font-family:'Liberation Mono',monospace;white-space:nowrap;right:calc(100% - 1403.5px);">101</div><div style="top:447.365px;height:18.67px;line-height:18.67px;font-size:14.67px;color:#1a1a1a;font-family:'Liberation Mono',monospace;white-space:nowrap;right:calc(100% - 1466.5px);">2008</div><div style="top:467.9px;height:17.2px;line-height:17.2px;font-size:13.2px;color:#000;font-family:'Liberation Sans',sans-serif;white-space:nowrap;right:calc(100% - 739px);transform:scaleX(1.0308);transform-origin:right center;">12</div><div style="top:467.9px;height:17.2px;line-height:17.2px;font-size:13.2px;color:#000;font-family:'Liberation Sans',sans-serif;white-space:nowrap;left:740px;transform:scaleX(1.0461);transform-origin:left center;">International Commerce Centre</div><div style="top:467.9px;height:17.2px;line-height:17.2px;font-size:13.2px;color:#000;font-family:'Liberation Sans',sans-serif;white-space:nowrap;left:950px;transform:scaleX(0.9981);transform-origin:left center;">Hong Kong</div><div style="top:467.9px;height:17.2px;line-height:17.2px;font-size:13.2px;color:#000;font-family:'Liberation Sans',sans-serif;white-space:nowrap;left:1062.5px;transform:scaleX(0.9924);transform-origin:left center;">China</div><div style="top:466.365px;height:18.67px;line-height:18.67px;font-size:14.67px;color:#1a1a1a;font-family:'Liberation Mono',monospace;white-space:nowrap;right:calc(100% - 1264px);">484 m</div><div style="top:466.365px;height:18.67px;line-height:18.67px;font-size:14.67px;color:#1a1a1a;font-family:'Liberation Mono',monospace;white-space:nowrap;right:calc(100% - 1340.5px);">1588 ft</div><div style="top:466.365px;height:18.67px;line-height:18.67px;font-size:14.67px;color:#1a1a1a;font-family:'Liberation Mono',monospace;white-space:nowrap;right:calc(100% - 1403.5px);">118</div><div style="top:466.365px;height:18.67px;line-height:18.67px;font-size:14.67px;color:#1a1a1a;font-family:'Liberation Mono',monospace;white-space:nowrap;right:calc(100% - 1466.5px);">2010</div><div style="top:487.9px;height:17.2px;line-height:17.2px;font-size:13.2px;color:#000;font-family:'Liberation Sans',sans-serif;white-space:nowrap;right:calc(100% - 739px);transform:scaleX(1.0308);transform-origin:right center;">13</div><div style="top:487.9px;height:17.2px;line-height:17.2px;font-size:13.2px;color:#000;font-family:'Liberation Sans',sans-serif;white-space:nowrap;left:740px;transform:scaleX(1.0186);transform-origin:left center;">Lakhta Center</div><div style="top:487.9px;height:17.2px;line-height:17.2px;font-size:13.2px;color:#000;font-family:'Liberation Sans',sans-serif;white-space:nowrap;left:950px;transform:scaleX(1.0139);transform-origin:left center;">St. Petersburg</div><div style="top:487.9px;height:17.2px;line-height:17.2px;font-size:13.2px;color:#000;font-family:'Liberation Sans',sans-serif;white-space:nowrap;left:1062.5px;transform:scaleX(0.947);transform-origin:left center;">Russia</div><div style="top:486.365px;height:18.67px;line-height:18.67px;font-size:14.67px;color:#1a1a1a;font-family:'Liberation Mono',monospace;white-space:nowrap;right:calc(100% - 1264px);">462 m</div><div style="top:486.365px;height:18.67px;line-height:18.67px;font-size:14.67px;color:#1a1a1a;font-family:'Liberation Mono',monospace;white-space:nowrap;right:calc(100% - 1340.5px);">1516 ft</div><div style="top:486.365px;height:18.67px;line-height:18.67px;font-size:14.67px;color:#1a1a1a;font-family:'Liberation Mono',monospace;white-space:nowrap;right:calc(100% - 1403.5px);">86</div><div style="top:486.365px;height:18.67px;line-height:18.67px;font-size:14.67px;color:#1a1a1a;font-family:'Liberation Mono',monospace;white-space:nowrap;right:calc(100% - 1466.5px);">2018</div><div style="top:507.9px;height:17.2px;line-height:17.2px;font-size:13.2px;color:#000;font-family:'Liberation Sans',sans-serif;white-space:nowrap;right:calc(100% - 739px);transform:scaleX(1.0308);transform-origin:right center;">14</div><div style="top:507.9px;height:17.2px;line-height:17.2px;font-size:13.2px;color:#000;font-family:'Liberation Sans',sans-serif;white-space:nowrap;left:740px;transform:scaleX(1.0214);transform-origin:left center;">Landmark 81</div><div style="top:507.9px;height:17.2px;line-height:17.2px;font-size:13.2px;color:#000;font-family:'Liberation Sans',sans-serif;white-space:nowrap;left:950px;transform:scaleX(1.0256);transform-origin:left center;">Ho Chi Minh City</div><div style="top:507.9px;height:17.2px;line-height:17.2px;font-size:13.2px;color:#000;font-family:'Liberation Sans',sans-serif;white-space:nowrap;left:1062.5px;transform:scaleX(1.0636);transform-origin:left center;">Vietnam</div><div style="top:506.36500000000007px;height:18.67px;line-height:18.67px;font-size:14.67px;color:#1a1a1a;font-family:'Liberation Mono',monospace;white-space:nowrap;right:calc(100% - 1264px);">461 m</div><div style="top:506.36500000000007px;height:18.67px;line-height:18.67px;font-size:14.67px;color:#1a1a1a;font-family:'Liberation Mono',monospace;white-space:nowrap;right:calc(100% - 1340.5px);">1513 ft</div><div style="top:506.36500000000007px;height:18.67px;line-height:18.67px;font-size:14.67px;color:#1a1a1a;font-family:'Liberation Mono',monospace;white-space:nowrap;right:calc(100% - 1403.5px);">81</div><div style="top:506.36500000000007px;height:18.67px;line-height:18.67px;font-size:14.67px;color:#1a1a1a;font-family:'Liberation Mono',monospace;white-space:nowrap;right:calc(100% - 1466.5px);">2018</div><div style="top:527.9px;height:17.2px;line-height:17.2px;font-size:13.2px;color:#000;font-family:'Liberation Sans',sans-serif;white-space:nowrap;right:calc(100% - 739px);transform:scaleX(1.0308);transform-origin:right center;">15</div><div style="top:527.9px;height:17.2px;line-height:17.2px;font-size:13.2px;color:#000;font-family:'Liberation Sans',sans-serif;white-space:nowrap;left:740px;transform:scaleX(0.9839);transform-origin:left center;">Changsha IFS Tower T1</div><div style="top:527.9px;height:17.2px;line-height:17.2px;font-size:13.2px;color:#000;font-family:'Liberation Sans',sans-serif;white-space:nowrap;left:950px;transform:scaleX(0.9748);transform-origin:left center;">Changsha</div><div style="top:527.9px;height:17.2px;line-height:17.2px;font-size:13.2px;color:#000;font-family:'Liberation Sans',sans-serif;white-space:nowrap;left:1062.5px;transform:scaleX(0.9924);transform-origin:left center;">China</div><div style="top:526.365px;height:18.67px;line-height:18.67px;font-size:14.67px;color:#1a1a1a;font-family:'Liberation Mono',monospace;white-space:nowrap;right:calc(100% - 1264px);">452 m</div><div style="top:526.365px;height:18.67px;line-height:18.67px;font-size:14.67px;color:#1a1a1a;font-family:'Liberation Mono',monospace;white-space:nowrap;right:calc(100% - 1340.5px);">1483 ft</div><div style="top:526.365px;height:18.67px;line-height:18.67px;font-size:14.67px;color:#1a1a1a;font-family:'Liberation Mono',monospace;white-space:nowrap;right:calc(100% - 1403.5px);">88</div><div style="top:526.365px;height:18.67px;line-height:18.67px;font-size:14.67px;color:#1a1a1a;font-family:'Liberation Mono',monospace;white-space:nowrap;right:calc(100% - 1466.5px);">2017</div><div style="top:547.9px;height:17.2px;line-height:17.2px;font-size:13.2px;color:#000;font-family:'Liberation Sans',sans-serif;white-space:nowrap;right:calc(100% - 739px);transform:scaleX(1.0308);transform-origin:right center;">16</div><div style="top:547.9px;height:17.2px;line-height:17.2px;font-size:13.2px;color:#000;font-family:'Liberation Sans',sans-serif;white-space:nowrap;left:740px;transform:scaleX(1.0425);transform-origin:left center;">Petronas Tower 1</div><div style="top:547.9px;height:17.2px;line-height:17.2px;font-size:13.2px;color:#000;font-family:'Liberation Sans',sans-serif;white-space:nowrap;left:950px;transform:scaleX(1.0178);transform-origin:left center;">Kuala Lumpur</div><div style="top:547.9px;height:17.2px;line-height:17.2px;font-size:13.2px;color:#000;font-family:'Liberation Sans',sans-serif;white-space:nowrap;left:1062.5px;transform:scaleX(1.0305);transform-origin:left center;">Malaysia</div><div style="top:546.365px;height:18.67px;line-height:18.67px;font-size:14.67px;color:#1a1a1a;font-family:'Liberation Mono',monospace;white-space:nowrap;right:calc(100% - 1264px);">452 m</div><div style="top:546.365px;height:18.67px;line-height:18.67px;font-size:14.67px;color:#1a1a1a;font-family:'Liberation Mono',monospace;white-space:nowrap;right:calc(100% - 1340.5px);">1483 ft</div><div style="top:546.365px;height:18.67px;line-height:18.67px;font-size:14.67px;color:#1a1a1a;font-family:'Liberation Mono',monospace;white-space:nowrap;right:calc(100% - 1403.5px);">88</div><div style="top:546.365px;height:18.67px;line-height:18.67px;font-size:14.67px;color:#1a1a1a;font-family:'Liberation Mono',monospace;white-space:nowrap;right:calc(100% - 1466.5px);">1998</div><div style="top:567.9px;height:17.2px;line-height:17.2px;font-size:13.2px;color:#000;font-family:'Liberation Sans',sans-serif;white-space:nowrap;right:calc(100% - 739px);transform:scaleX(1.0308);transform-origin:right center;">16</div><div style="top:567.9px;height:17.2px;line-height:17.2px;font-size:13.2px;color:#000;font-family:'Liberation Sans',sans-serif;white-space:nowrap;left:740px;transform:scaleX(1.0425);transform-origin:left center;">Petronas Tower 2</div><div style="top:567.9px;height:17.2px;line-height:17.2px;font-size:13.2px;color:#000;font-family:'Liberation Sans',sans-serif;white-space:nowrap;left:950px;transform:scaleX(1.0178);transform-origin:left center;">Kuala Lumpur</div><div style="top:567.9px;height:17.2px;line-height:17.2px;font-size:13.2px;color:#000;font-family:'Liberation Sans',sans-serif;white-space:nowrap;left:1062.5px;transform:scaleX(1.0305);transform-origin:left center;">Malaysia</div><div style="top:566.365px;height:18.67px;line-height:18.67px;font-size:14.67px;color:#1a1a1a;font-family:'Liberation Mono',monospace;white-space:nowrap;right:calc(100% - 1264px);">452 m</div><div style="top:566.365px;height:18.67px;line-height:18.67px;font-size:14.67px;color:#1a1a1a;font-family:'Liberation Mono',monospace;white-space:nowrap;right:calc(100% - 1340.5px);">1483 ft</div><div style="top:566.365px;height:18.67px;line-height:18.67px;font-size:14.67px;color:#1a1a1a;font-family:'Liberation Mono',monospace;white-space:nowrap;right:calc(100% - 1403.5px);">88</div><div style="top:566.365px;height:18.67px;line-height:18.67px;font-size:14.67px;color:#1a1a1a;font-family:'Liberation Mono',monospace;white-space:nowrap;right:calc(100% - 1466.5px);">1998</div><div style="top:587.9px;height:17.2px;line-height:17.2px;font-size:13.2px;color:#000;font-family:'Liberation Sans',sans-serif;white-space:nowrap;right:calc(100% - 739px);transform:scaleX(1.0308);transform-origin:right center;">16</div><div style="top:587.9px;height:17.2px;line-height:17.2px;font-size:13.2px;color:#000;font-family:'Liberation Sans',sans-serif;white-space:nowrap;left:740px;transform:scaleX(0.987);transform-origin:left center;">The Exchange 106</div><div style="top:587.9px;height:17.2px;line-height:17.2px;font-size:13.2px;color:#000;font-family:'Liberation Sans',sans-serif;white-space:nowrap;left:950px;transform:scaleX(1.0178);transform-origin:left center;">Kuala Lumpur</div><div style="top:587.9px;height:17.2px;line-height:17.2px;font-size:13.2px;color:#000;font-family:'Liberation Sans',sans-serif;white-space:nowrap;left:1062.5px;transform:scaleX(1.0305);transform-origin:left center;">Malaysia</div><div style="top:586.365px;height:18.67px;line-height:18.67px;font-size:14.67px;color:#1a1a1a;font-family:'Liberation Mono',monospace;white-space:nowrap;right:calc(100% - 1264px);">452 m</div><div style="top:586.365px;height:18.67px;line-height:18.67px;font-size:14.67px;color:#1a1a1a;font-family:'Liberation Mono',monospace;white-space:nowrap;right:calc(100% - 1340.5px);">1483 ft</div><div style="top:586.365px;height:18.67px;line-height:18.67px;font-size:14.67px;color:#1a1a1a;font-family:'Liberation Mono',monospace;white-space:nowrap;right:calc(100% - 1403.5px);">97</div><div style="top:586.365px;height:18.67px;line-height:18.67px;font-size:14.67px;color:#1a1a1a;font-family:'Liberation Mono',monospace;white-space:nowrap;right:calc(100% - 1466.5px);">2018</div><div style="top:607.9px;height:17.2px;line-height:17.2px;font-size:13.2px;color:#000;font-family:'Liberation Sans',sans-serif;white-space:nowrap;right:calc(100% - 739px);transform:scaleX(1.0308);transform-origin:right center;">19</div><div style="top:607.9px;height:17.2px;line-height:17.2px;font-size:13.2px;color:#000;font-family:'Liberation Sans',sans-serif;white-space:nowrap;left:740px;transform:scaleX(1.0502);transform-origin:left center;">Zifeng Tower</div><div style="top:607.9px;height:17.2px;line-height:17.2px;font-size:13.2px;color:#000;font-family:'Liberation Sans',sans-serif;white-space:nowrap;left:950px;transform:scaleX(1.0389);transform-origin:left center;">Nanjing</div><div style="top:607.9px;height:17.2px;line-height:17.2px;font-size:13.2px;color:#000;font-family:'Liberation Sans',sans-serif;white-space:nowrap;left:1062.5px;transform:scaleX(0.9924);transform-origin:left center;">China</div><div style="top:606.365px;height:18.67px;line-height:18.67px;font-size:14.67px;color:#1a1a1a;font-family:'Liberation Mono',monospace;white-space:nowrap;right:calc(100% - 1264px);">450 m</div><div style="top:606.365px;height:18.67px;line-height:18.67px;font-size:14.67px;color:#1a1a1a;font-family:'Liberation Mono',monospace;white-space:nowrap;right:calc(100% - 1340.5px);">1476 ft</div><div style="top:606.365px;height:18.67px;line-height:18.67px;font-size:14.67px;color:#1a1a1a;font-family:'Liberation Mono',monospace;white-space:nowrap;right:calc(100% - 1403.5px);">89</div><div style="top:606.365px;height:18.67px;line-height:18.67px;font-size:14.67px;color:#1a1a1a;font-family:'Liberation Mono',monospace;white-space:nowrap;right:calc(100% - 1466.5px);">2010</div><div style="top:627.4px;height:17.2px;line-height:17.2px;font-size:13.2px;color:#000;font-family:'Liberation Sans',sans-serif;white-space:nowrap;right:calc(100% - 739px);transform:scaleX(1.0308);transform-origin:right center;">19</div><div style="top:627.4px;height:17.2px;line-height:17.2px;font-size:13.2px;color:#000;font-family:'Liberation Sans',sans-serif;white-space:nowrap;left:740px;transform:scaleX(0.9427);transform-origin:left center;">Suzhou IFS</div><div style="top:627.4px;height:17.2px;line-height:17.2px;font-size:13.2px;color:#000;font-family:'Liberation Sans',sans-serif;white-space:nowrap;left:950px;transform:scaleX(0.9865);transform-origin:left center;">Suzhou</div><div style="top:627.4px;height:17.2px;line-height:17.2px;font-size:13.2px;color:#000;font-family:'Liberation Sans',sans-serif;white-space:nowrap;left:1062.5px;transform:scaleX(0.9924);transform-origin:left center;">China</div><div style="top:625.865px;height:18.67px;line-height:18.67px;font-size:14.67px;color:#1a1a1a;font-family:'Liberation Mono',monospace;white-space:nowrap;right:calc(100% - 1264px);">450 m</div><div style="top:625.865px;height:18.67px;line-height:18.67px;font-size:14.67px;color:#1a1a1a;font-family:'Liberation Mono',monospace;white-space:nowrap;right:calc(100% - 1340.5px);">1476 ft</div><div style="top:625.865px;height:18.67px;line-height:18.67px;font-size:14.67px;color:#1a1a1a;font-family:'Liberation Mono',monospace;white-space:nowrap;right:calc(100% - 1403.5px);">92</div><div style="top:625.865px;height:18.67px;line-height:18.67px;font-size:14.67px;color:#1a1a1a;font-family:'Liberation Mono',monospace;white-space:nowrap;right:calc(100% - 1466.5px);">2017</div><div style="top:321.25px;height:16.5px;line-height:16.5px;font-size:12.5px;color:#000;font-family:'Liberation Sans',sans-serif;white-space:nowrap;font-weight:bold;left:1461.5px;width:40px;text-align:center;">T o</div><div style="top:339.25px;height:16.5px;line-height:16.5px;font-size:12.5px;color:#000;font-family:'Liberation Sans',sans-serif;white-space:nowrap;font-weight:bold;left:1461.5px;width:40px;text-align:center;">p 1</div><div style="top:357.25px;height:16.5px;line-height:16.5px;font-size:12.5px;color:#000;font-family:'Liberation Sans',sans-serif;white-space:nowrap;font-weight:bold;left:1461.5px;width:40px;text-align:center;">0</div><div style="top:429.75px;height:16.5px;line-height:16.5px;font-size:12.5px;color:#000;font-family:'Liberation Sans',sans-serif;white-space:nowrap;font-weight:bold;left:1493.0px;width:40px;text-align:center;">T o p</div><div style="top:447.75px;height:16.5px;line-height:16.5px;font-size:12.5px;color:#000;font-family:'Liberation Sans',sans-serif;white-space:nowrap;font-weight:bold;left:1493.0px;width:40px;text-align:center;">2 0</div><div style="top:687.9px;height:17.2px;line-height:17.2px;font-size:13.2px;color:#000;font-family:'Liberation Sans',sans-serif;white-space:nowrap;left:683px;transform:scaleX(1.0426);transform-origin:left center;">Notes:</div><div style="top:707.9px;height:17.2px;line-height:17.2px;font-size:13.2px;color:#000;font-family:'Liberation Sans',sans-serif;white-space:nowrap;left:683px;transform:scaleX(1.0645);transform-origin:left center;">a) "Metric" and "Imperial" columns use custom number formatting.</div><div style="top:727.9px;height:17.2px;line-height:17.2px;font-size:13.2px;color:#000;font-family:'Liberation Sans',sans-serif;white-space:nowrap;left:683px;transform:scaleX(1.0611);transform-origin:left center;">b) All number columns use "Courier New" font for improved number readability.</div><div style="top:747.9px;height:17.2px;line-height:17.2px;font-size:13.2px;color:#000;font-family:'Liberation Sans',sans-serif;white-space:nowrap;left:683px;transform:scaleX(1.041);transform-origin:left center;">c) Multiple merged ranges were used for table header and categories header.</div><div style="left:674px;top:78px;width:868px;height:1px;background:#2a84dc;"></div><div style="left:674px;top:78px;width:1px;height:722px;background:#2a84dc;"></div><div style="left:1541px;top:78px;width:1px;height:722px;background:#2a84dc;"></div></div></div>
</body></html>
